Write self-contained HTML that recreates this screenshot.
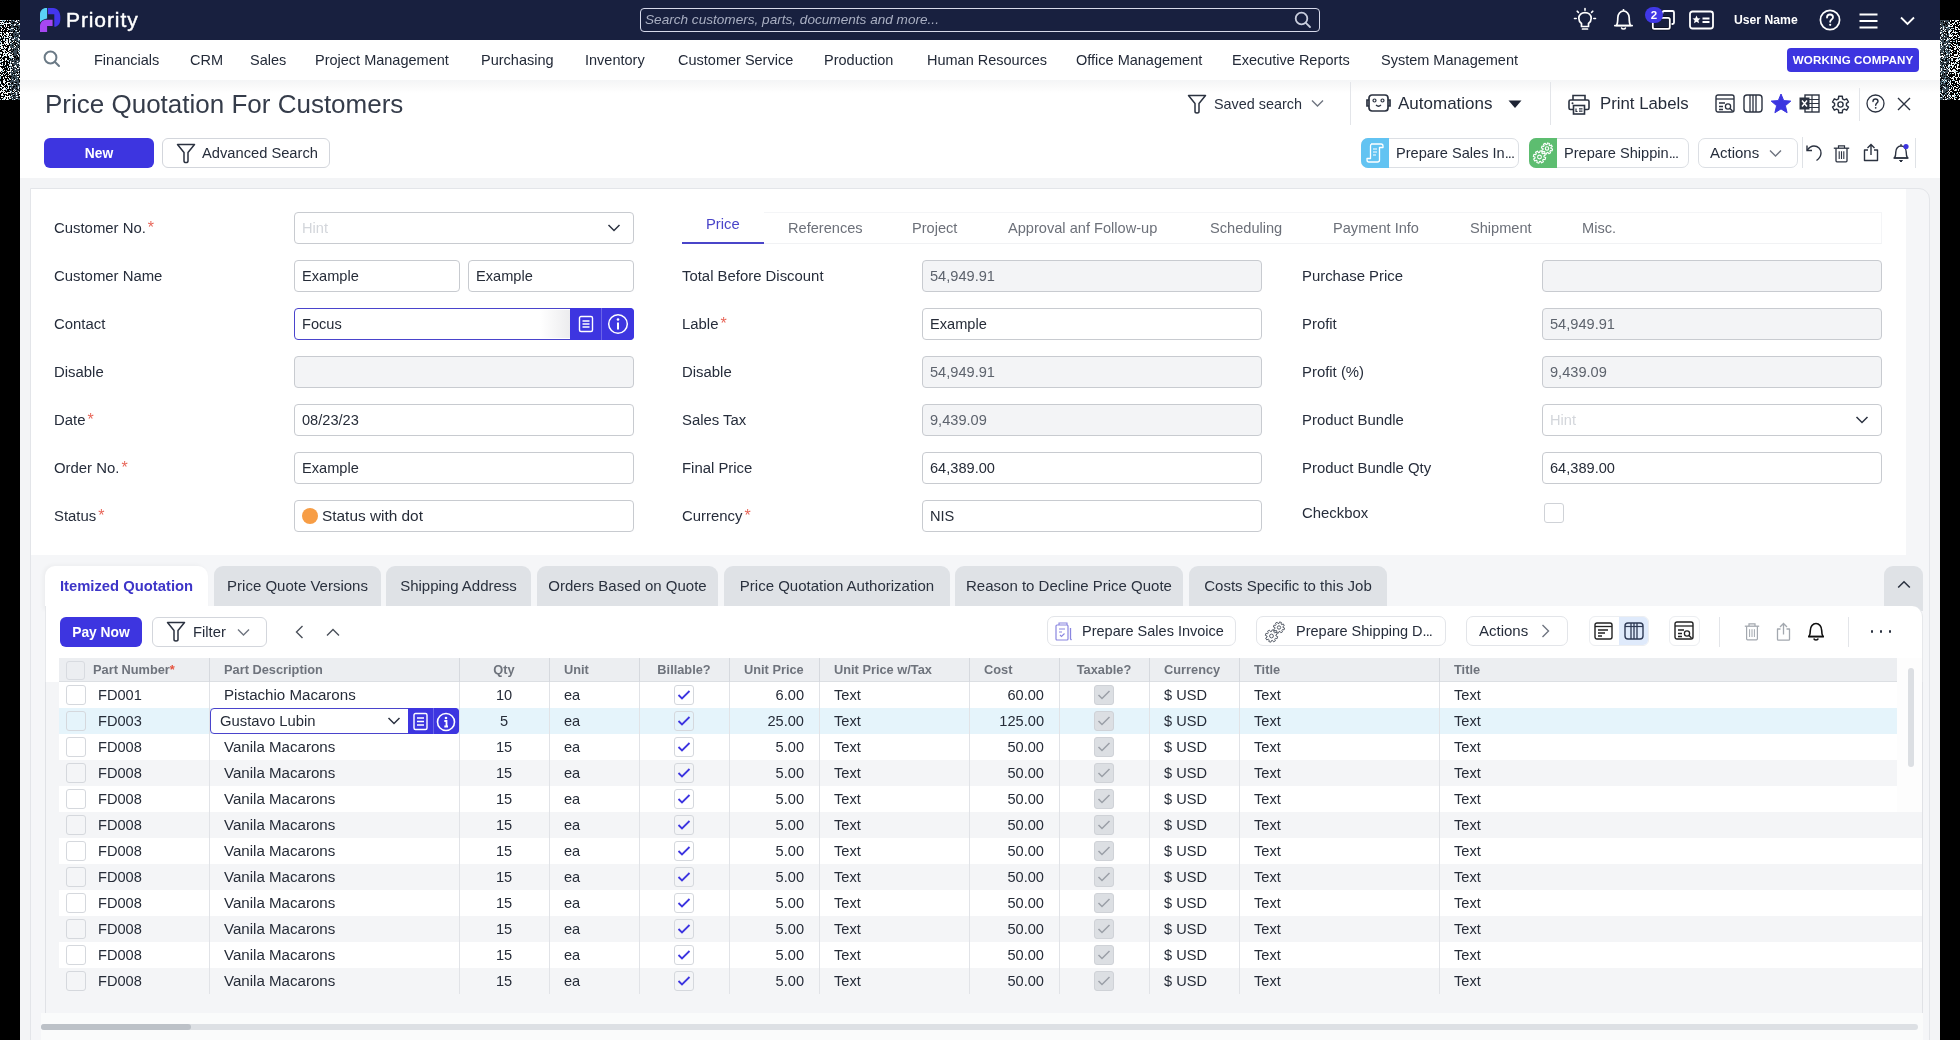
<!DOCTYPE html>
<html><head><meta charset="utf-8"><style>
html,body{margin:0;padding:0;}
body{width:1960px;height:1040px;overflow:hidden;position:relative;background:#000;font-family:"Liberation Sans", sans-serif;}
svg{overflow:visible}
</style></head><body>
<div style="position:absolute;left:0;top:0;width:1960px;height:1040px;will-change:transform;background:#000;overflow:hidden"><svg style="position:absolute;left:0px;top:0" width="20" height="120" shape-rendering="crispEdges"><path fill="#ffffff" d="M0 20h1v1h-1zM1 20h1v1h-1zM5 20h1v1h-1zM7 20h1v1h-1zM10 20h1v1h-1zM16 20h1v1h-1zM18 20h1v1h-1zM15 21h1v1h-1zM16 21h1v1h-1zM0 22h1v1h-1zM2 22h1v1h-1zM9 22h1v1h-1zM17 22h1v1h-1zM5 23h1v1h-1zM6 23h1v1h-1zM7 23h1v1h-1zM10 23h1v1h-1zM19 23h1v1h-1zM0 24h1v1h-1zM2 24h1v1h-1zM6 24h1v1h-1zM15 24h1v1h-1zM19 24h1v1h-1zM4 25h1v1h-1zM6 25h1v1h-1zM14 25h1v1h-1zM4 26h1v1h-1zM6 26h1v1h-1zM8 26h1v1h-1zM1 27h1v1h-1zM2 28h1v1h-1zM7 28h1v1h-1zM11 28h1v1h-1zM12 28h1v1h-1zM1 29h1v1h-1zM4 29h1v1h-1zM8 29h1v1h-1zM14 29h1v1h-1zM1 30h1v1h-1zM7 30h1v1h-1zM16 30h1v1h-1zM19 31h1v1h-1zM0 32h1v1h-1zM1 32h1v1h-1zM3 32h1v1h-1zM6 32h1v1h-1zM7 32h1v1h-1zM9 32h1v1h-1zM11 32h1v1h-1zM17 32h1v1h-1zM4 33h1v1h-1zM6 33h1v1h-1zM7 33h1v1h-1zM8 33h1v1h-1zM0 34h1v1h-1zM1 34h1v1h-1zM4 34h1v1h-1zM5 34h1v1h-1zM8 34h1v1h-1zM10 34h1v1h-1zM1 35h1v1h-1zM3 35h1v1h-1zM19 35h1v1h-1zM2 36h1v1h-1zM7 36h1v1h-1zM9 36h1v1h-1zM11 36h1v1h-1zM0 37h1v1h-1zM4 37h1v1h-1zM6 37h1v1h-1zM7 37h1v1h-1zM9 38h1v1h-1zM10 38h1v1h-1zM14 38h1v1h-1zM18 38h1v1h-1zM4 39h1v1h-1zM6 39h1v1h-1zM12 39h1v1h-1zM13 39h1v1h-1zM19 39h1v1h-1zM1 40h1v1h-1zM7 40h1v1h-1zM6 41h1v1h-1zM9 41h1v1h-1zM13 41h1v1h-1zM15 41h1v1h-1zM4 42h1v1h-1zM6 42h1v1h-1zM7 42h1v1h-1zM9 42h1v1h-1zM1 43h1v1h-1zM5 43h1v1h-1zM6 43h1v1h-1zM7 43h1v1h-1zM10 43h1v1h-1zM18 43h1v1h-1zM1 44h1v1h-1zM3 44h1v1h-1zM7 44h1v1h-1zM8 44h1v1h-1zM16 44h1v1h-1zM0 45h1v1h-1zM14 45h1v1h-1zM1 46h1v1h-1zM2 46h1v1h-1zM4 46h1v1h-1zM9 46h1v1h-1zM15 46h1v1h-1zM1 47h1v1h-1zM4 47h1v1h-1zM6 47h1v1h-1zM9 47h1v1h-1zM14 47h1v1h-1zM1 48h1v1h-1zM2 48h1v1h-1zM5 48h1v1h-1zM10 48h1v1h-1zM12 48h1v1h-1zM18 48h1v1h-1zM0 49h1v1h-1zM8 49h1v1h-1zM9 49h1v1h-1zM5 50h1v1h-1zM8 50h1v1h-1zM3 51h1v1h-1zM6 51h1v1h-1zM10 51h1v1h-1zM18 51h1v1h-1zM1 52h1v1h-1zM7 52h1v1h-1zM19 52h1v1h-1zM1 53h1v1h-1zM3 53h1v1h-1zM4 53h1v1h-1zM6 53h1v1h-1zM7 53h1v1h-1zM9 53h1v1h-1zM3 54h1v1h-1zM5 54h1v1h-1zM8 54h1v1h-1zM9 54h1v1h-1zM10 54h1v1h-1zM11 54h1v1h-1zM17 54h1v1h-1zM0 55h1v1h-1zM4 55h1v1h-1zM5 55h1v1h-1zM6 55h1v1h-1zM8 55h1v1h-1zM12 55h1v1h-1zM18 55h1v1h-1zM0 56h1v1h-1zM2 56h1v1h-1zM3 56h1v1h-1zM9 56h1v1h-1zM11 56h1v1h-1zM10 57h1v1h-1zM12 57h1v1h-1zM13 57h1v1h-1zM6 58h1v1h-1zM0 59h1v1h-1zM5 59h1v1h-1zM6 59h1v1h-1zM13 59h1v1h-1zM2 60h1v1h-1zM3 60h1v1h-1zM5 60h1v1h-1zM0 61h1v1h-1zM2 61h1v1h-1zM10 61h1v1h-1zM17 61h1v1h-1zM5 62h1v1h-1zM10 62h1v1h-1zM12 62h1v1h-1zM13 62h1v1h-1zM19 62h1v1h-1zM2 63h1v1h-1zM5 63h1v1h-1zM8 63h1v1h-1zM17 63h1v1h-1zM19 63h1v1h-1zM0 64h1v1h-1zM5 64h1v1h-1zM10 64h1v1h-1zM11 64h1v1h-1zM0 65h1v1h-1zM1 65h1v1h-1zM2 65h1v1h-1zM9 65h1v1h-1zM11 65h1v1h-1zM15 65h1v1h-1zM7 66h1v1h-1zM14 66h1v1h-1zM15 66h1v1h-1zM19 66h1v1h-1zM0 67h1v1h-1zM10 67h1v1h-1zM12 67h1v1h-1zM16 67h1v1h-1zM0 68h1v1h-1zM1 68h1v1h-1zM3 68h1v1h-1zM8 68h1v1h-1zM17 68h1v1h-1zM18 68h1v1h-1zM0 69h1v1h-1zM2 69h1v1h-1zM8 69h1v1h-1zM10 69h1v1h-1zM11 69h1v1h-1zM15 69h1v1h-1zM0 70h1v1h-1zM1 70h1v1h-1zM4 70h1v1h-1zM10 70h1v1h-1zM0 71h1v1h-1zM3 71h1v1h-1zM7 71h1v1h-1zM8 71h1v1h-1zM9 71h1v1h-1zM10 71h1v1h-1zM12 71h1v1h-1zM18 71h1v1h-1zM8 72h1v1h-1zM3 73h1v1h-1zM18 73h1v1h-1zM0 74h1v1h-1zM10 74h1v1h-1zM15 74h1v1h-1zM17 74h1v1h-1zM1 75h1v1h-1zM2 75h1v1h-1zM8 75h1v1h-1zM17 76h1v1h-1zM18 76h1v1h-1zM3 77h1v1h-1zM5 77h1v1h-1zM6 77h1v1h-1zM8 77h1v1h-1zM3 78h1v1h-1zM9 78h1v1h-1zM19 78h1v1h-1zM7 79h1v1h-1zM10 79h1v1h-1zM4 80h1v1h-1zM14 80h1v1h-1zM3 81h1v1h-1zM4 81h1v1h-1zM0 82h1v1h-1zM3 82h1v1h-1zM4 82h1v1h-1zM7 82h1v1h-1zM8 82h1v1h-1zM7 83h1v1h-1zM10 83h1v1h-1zM19 83h1v1h-1zM5 84h1v1h-1zM7 84h1v1h-1zM1 85h1v1h-1zM2 85h1v1h-1zM8 85h1v1h-1zM12 85h1v1h-1zM2 86h1v1h-1zM3 86h1v1h-1zM8 86h1v1h-1zM0 87h1v1h-1zM1 87h1v1h-1zM4 87h1v1h-1zM8 87h1v1h-1zM18 87h1v1h-1zM4 88h1v1h-1zM8 88h1v1h-1zM10 88h1v1h-1zM2 89h1v1h-1zM3 89h1v1h-1zM4 89h1v1h-1zM14 89h1v1h-1zM1 90h1v1h-1zM3 90h1v1h-1zM13 90h1v1h-1zM15 90h1v1h-1zM0 91h1v1h-1zM4 91h1v1h-1zM10 91h1v1h-1zM18 91h1v1h-1zM0 92h1v1h-1zM3 92h1v1h-1zM7 92h1v1h-1zM9 92h1v1h-1zM10 92h1v1h-1zM16 92h1v1h-1zM19 92h1v1h-1zM2 93h1v1h-1zM4 93h1v1h-1zM5 93h1v1h-1zM6 93h1v1h-1zM7 93h1v1h-1zM19 93h1v1h-1zM1 94h1v1h-1zM2 94h1v1h-1zM7 94h1v1h-1zM16 94h1v1h-1zM2 95h1v1h-1zM5 95h1v1h-1zM11 95h1v1h-1zM19 95h1v1h-1zM5 96h1v1h-1zM6 96h1v1h-1zM7 96h1v1h-1zM8 96h1v1h-1zM9 96h1v1h-1zM16 96h1v1h-1zM17 96h1v1h-1zM1 97h1v1h-1zM2 97h1v1h-1zM4 97h1v1h-1zM7 97h1v1h-1zM12 97h1v1h-1zM4 98h1v1h-1zM7 98h1v1h-1zM10 98h1v1h-1zM16 98h1v1h-1zM2 99h1v1h-1zM4 99h1v1h-1zM6 99h1v1h-1zM7 99h1v1h-1zM14 99h1v1h-1z"/><path fill="#9fc9d8" d="M2 20h1v1h-1zM3 20h1v1h-1zM4 20h1v1h-1zM9 20h1v1h-1zM13 20h1v1h-1zM2 21h1v1h-1zM4 21h1v1h-1zM6 22h1v1h-1zM4 23h1v1h-1zM1 24h1v1h-1zM11 24h1v1h-1zM18 24h1v1h-1zM0 26h1v1h-1zM1 26h1v1h-1zM5 27h1v1h-1zM13 28h1v1h-1zM16 28h1v1h-1zM9 29h1v1h-1zM10 29h1v1h-1zM15 30h1v1h-1zM18 32h1v1h-1zM1 33h1v1h-1zM7 34h1v1h-1zM2 37h1v1h-1zM5 37h1v1h-1zM8 37h1v1h-1zM10 37h1v1h-1zM14 37h1v1h-1zM16 37h1v1h-1zM0 38h1v1h-1zM4 38h1v1h-1zM3 40h1v1h-1zM6 40h1v1h-1zM10 40h1v1h-1zM18 40h1v1h-1zM0 41h1v1h-1zM0 42h1v1h-1zM8 43h1v1h-1zM11 43h1v1h-1zM0 44h1v1h-1zM2 44h1v1h-1zM0 47h1v1h-1zM3 48h1v1h-1zM8 48h1v1h-1zM19 50h1v1h-1zM0 53h1v1h-1zM5 53h1v1h-1zM19 53h1v1h-1zM6 54h1v1h-1zM3 55h1v1h-1zM9 55h1v1h-1zM6 56h1v1h-1zM10 56h1v1h-1zM2 57h1v1h-1zM11 57h1v1h-1zM11 58h1v1h-1zM9 59h1v1h-1zM8 60h1v1h-1zM1 61h1v1h-1zM8 61h1v1h-1zM0 62h1v1h-1zM10 63h1v1h-1zM18 63h1v1h-1zM2 64h1v1h-1zM9 64h1v1h-1zM4 65h1v1h-1zM10 65h1v1h-1zM16 66h1v1h-1zM5 67h1v1h-1zM7 67h1v1h-1zM10 68h1v1h-1zM2 70h1v1h-1zM6 70h1v1h-1zM2 71h1v1h-1zM6 72h1v1h-1zM2 74h1v1h-1zM13 74h1v1h-1zM0 76h1v1h-1zM0 77h1v1h-1zM0 78h1v1h-1zM17 78h1v1h-1zM9 79h1v1h-1zM8 80h1v1h-1zM0 81h1v1h-1zM15 83h1v1h-1zM1 84h1v1h-1zM7 85h1v1h-1zM9 85h1v1h-1zM10 85h1v1h-1zM18 86h1v1h-1zM10 87h1v1h-1zM1 88h1v1h-1zM7 88h1v1h-1zM5 89h1v1h-1zM6 90h1v1h-1zM9 90h1v1h-1zM11 91h1v1h-1zM15 92h1v1h-1zM13 94h1v1h-1zM3 95h1v1h-1zM10 96h1v1h-1zM5 97h1v1h-1zM3 98h1v1h-1zM17 98h1v1h-1zM0 99h1v1h-1zM3 99h1v1h-1zM8 99h1v1h-1zM12 99h1v1h-1z"/><path fill="#3a4a55" d="M11 20h1v1h-1zM12 20h1v1h-1zM14 20h1v1h-1zM17 20h1v1h-1zM19 20h1v1h-1zM11 21h1v1h-1zM13 21h1v1h-1zM14 21h1v1h-1zM17 21h1v1h-1zM19 21h1v1h-1zM10 22h1v1h-1zM11 22h1v1h-1zM12 22h1v1h-1zM15 22h1v1h-1zM16 22h1v1h-1zM18 22h1v1h-1zM14 23h1v1h-1zM15 23h1v1h-1zM16 23h1v1h-1zM10 24h1v1h-1zM12 24h1v1h-1zM13 24h1v1h-1zM17 24h1v1h-1zM12 25h1v1h-1zM13 25h1v1h-1zM15 25h1v1h-1zM16 25h1v1h-1zM17 25h1v1h-1zM18 25h1v1h-1zM19 25h1v1h-1zM11 26h1v1h-1zM12 26h1v1h-1zM18 26h1v1h-1zM19 26h1v1h-1zM11 27h1v1h-1zM12 27h1v1h-1zM13 27h1v1h-1zM14 27h1v1h-1zM15 27h1v1h-1zM16 27h1v1h-1zM19 27h1v1h-1zM10 28h1v1h-1zM18 28h1v1h-1zM19 28h1v1h-1zM11 29h1v1h-1zM12 29h1v1h-1zM16 29h1v1h-1zM18 29h1v1h-1zM10 30h1v1h-1zM11 30h1v1h-1zM12 30h1v1h-1zM13 30h1v1h-1zM17 30h1v1h-1zM19 30h1v1h-1zM10 31h1v1h-1zM12 31h1v1h-1zM15 31h1v1h-1zM16 31h1v1h-1zM14 32h1v1h-1zM15 32h1v1h-1zM16 32h1v1h-1zM19 32h1v1h-1zM11 33h1v1h-1zM13 33h1v1h-1zM14 33h1v1h-1zM15 33h1v1h-1zM16 33h1v1h-1zM17 33h1v1h-1zM18 33h1v1h-1zM13 34h1v1h-1zM14 34h1v1h-1zM16 34h1v1h-1zM17 34h1v1h-1zM18 34h1v1h-1zM19 34h1v1h-1zM10 35h1v1h-1zM13 35h1v1h-1zM14 35h1v1h-1zM15 35h1v1h-1zM16 35h1v1h-1zM18 35h1v1h-1zM14 36h1v1h-1zM15 36h1v1h-1zM17 36h1v1h-1zM18 36h1v1h-1zM11 37h1v1h-1zM12 37h1v1h-1zM15 37h1v1h-1zM17 37h1v1h-1zM18 37h1v1h-1zM12 38h1v1h-1zM13 38h1v1h-1zM15 38h1v1h-1zM16 38h1v1h-1zM17 38h1v1h-1zM19 38h1v1h-1zM11 39h1v1h-1zM14 39h1v1h-1zM15 39h1v1h-1zM16 39h1v1h-1zM17 39h1v1h-1zM12 40h1v1h-1zM13 40h1v1h-1zM14 40h1v1h-1zM16 40h1v1h-1zM17 40h1v1h-1zM19 40h1v1h-1zM11 41h1v1h-1zM16 41h1v1h-1zM18 41h1v1h-1zM19 41h1v1h-1zM11 42h1v1h-1zM15 42h1v1h-1zM16 42h1v1h-1zM18 42h1v1h-1zM13 43h1v1h-1zM14 43h1v1h-1zM17 43h1v1h-1zM19 43h1v1h-1zM10 44h1v1h-1zM11 44h1v1h-1zM12 44h1v1h-1zM13 44h1v1h-1zM17 44h1v1h-1zM18 44h1v1h-1zM19 44h1v1h-1zM10 45h1v1h-1zM11 45h1v1h-1zM13 45h1v1h-1zM16 45h1v1h-1zM17 45h1v1h-1zM19 45h1v1h-1zM10 46h1v1h-1zM11 46h1v1h-1zM12 46h1v1h-1zM13 46h1v1h-1zM14 46h1v1h-1zM17 46h1v1h-1zM18 46h1v1h-1zM10 47h1v1h-1zM11 47h1v1h-1zM12 47h1v1h-1zM13 47h1v1h-1zM15 47h1v1h-1zM16 47h1v1h-1zM17 47h1v1h-1zM19 47h1v1h-1zM13 48h1v1h-1zM14 48h1v1h-1zM15 48h1v1h-1zM16 48h1v1h-1zM17 48h1v1h-1zM10 49h1v1h-1zM12 49h1v1h-1zM14 49h1v1h-1zM16 49h1v1h-1zM19 49h1v1h-1zM11 50h1v1h-1zM12 50h1v1h-1zM14 50h1v1h-1zM15 50h1v1h-1zM16 50h1v1h-1zM17 50h1v1h-1zM18 50h1v1h-1zM13 51h1v1h-1zM14 51h1v1h-1zM15 51h1v1h-1zM16 51h1v1h-1zM19 51h1v1h-1zM10 52h1v1h-1zM11 52h1v1h-1zM12 52h1v1h-1zM13 52h1v1h-1zM14 52h1v1h-1zM15 52h1v1h-1zM16 52h1v1h-1zM18 52h1v1h-1zM10 53h1v1h-1zM14 53h1v1h-1zM15 53h1v1h-1zM16 53h1v1h-1zM18 53h1v1h-1zM14 54h1v1h-1zM15 54h1v1h-1zM16 54h1v1h-1zM19 54h1v1h-1zM11 55h1v1h-1zM13 55h1v1h-1zM14 55h1v1h-1zM15 55h1v1h-1zM17 55h1v1h-1zM16 56h1v1h-1zM19 56h1v1h-1zM16 57h1v1h-1zM19 57h1v1h-1zM10 58h1v1h-1zM13 58h1v1h-1zM14 58h1v1h-1zM15 58h1v1h-1zM19 58h1v1h-1zM11 59h1v1h-1zM15 59h1v1h-1zM17 59h1v1h-1zM19 59h1v1h-1zM10 60h1v1h-1zM11 60h1v1h-1zM12 60h1v1h-1zM13 60h1v1h-1zM14 60h1v1h-1zM15 60h1v1h-1zM16 60h1v1h-1zM17 60h1v1h-1zM18 60h1v1h-1zM19 60h1v1h-1zM11 61h1v1h-1zM13 61h1v1h-1zM14 61h1v1h-1zM16 61h1v1h-1zM18 61h1v1h-1zM19 61h1v1h-1zM11 62h1v1h-1zM14 62h1v1h-1zM15 62h1v1h-1zM16 62h1v1h-1zM17 62h1v1h-1zM18 62h1v1h-1zM12 63h1v1h-1zM13 63h1v1h-1zM14 63h1v1h-1zM15 63h1v1h-1zM16 63h1v1h-1zM13 64h1v1h-1zM14 64h1v1h-1zM15 64h1v1h-1zM16 64h1v1h-1zM17 64h1v1h-1zM14 65h1v1h-1zM16 65h1v1h-1zM17 65h1v1h-1zM18 65h1v1h-1zM19 65h1v1h-1zM10 66h1v1h-1zM11 66h1v1h-1zM12 66h1v1h-1zM13 66h1v1h-1zM18 66h1v1h-1zM11 67h1v1h-1zM14 67h1v1h-1zM15 67h1v1h-1zM18 67h1v1h-1zM19 67h1v1h-1zM12 68h1v1h-1zM13 68h1v1h-1zM14 68h1v1h-1zM15 68h1v1h-1zM19 68h1v1h-1zM12 69h1v1h-1zM14 69h1v1h-1zM16 69h1v1h-1zM17 69h1v1h-1zM18 69h1v1h-1zM11 70h1v1h-1zM13 70h1v1h-1zM14 70h1v1h-1zM15 70h1v1h-1zM16 70h1v1h-1zM17 70h1v1h-1zM18 70h1v1h-1zM19 70h1v1h-1zM11 71h1v1h-1zM14 71h1v1h-1zM15 71h1v1h-1zM16 71h1v1h-1zM17 71h1v1h-1zM10 72h1v1h-1zM11 72h1v1h-1zM12 72h1v1h-1zM13 72h1v1h-1zM14 72h1v1h-1zM15 72h1v1h-1zM18 72h1v1h-1zM11 73h1v1h-1zM12 73h1v1h-1zM15 73h1v1h-1zM19 73h1v1h-1zM11 74h1v1h-1zM14 74h1v1h-1zM16 74h1v1h-1zM18 74h1v1h-1zM19 74h1v1h-1zM10 75h1v1h-1zM11 75h1v1h-1zM12 75h1v1h-1zM13 75h1v1h-1zM15 75h1v1h-1zM16 75h1v1h-1zM19 75h1v1h-1zM12 76h1v1h-1zM13 76h1v1h-1zM14 76h1v1h-1zM15 76h1v1h-1zM16 76h1v1h-1zM11 77h1v1h-1zM12 77h1v1h-1zM14 77h1v1h-1zM15 77h1v1h-1zM16 77h1v1h-1zM17 77h1v1h-1zM18 77h1v1h-1zM11 78h1v1h-1zM12 78h1v1h-1zM13 78h1v1h-1zM15 78h1v1h-1zM16 78h1v1h-1zM13 79h1v1h-1zM16 79h1v1h-1zM17 79h1v1h-1zM19 79h1v1h-1zM11 80h1v1h-1zM12 80h1v1h-1zM13 80h1v1h-1zM15 80h1v1h-1zM16 80h1v1h-1zM17 80h1v1h-1zM18 80h1v1h-1zM10 81h1v1h-1zM11 81h1v1h-1zM12 81h1v1h-1zM13 81h1v1h-1zM14 81h1v1h-1zM15 81h1v1h-1zM16 81h1v1h-1zM17 81h1v1h-1zM18 81h1v1h-1zM10 82h1v1h-1zM11 82h1v1h-1zM13 82h1v1h-1zM14 82h1v1h-1zM17 82h1v1h-1zM18 82h1v1h-1zM19 82h1v1h-1zM13 83h1v1h-1zM16 83h1v1h-1zM17 83h1v1h-1zM18 83h1v1h-1zM10 84h1v1h-1zM11 84h1v1h-1zM12 84h1v1h-1zM13 84h1v1h-1zM16 84h1v1h-1zM17 84h1v1h-1zM19 84h1v1h-1zM11 85h1v1h-1zM13 85h1v1h-1zM14 85h1v1h-1zM15 85h1v1h-1zM17 85h1v1h-1zM18 85h1v1h-1zM19 85h1v1h-1zM11 86h1v1h-1zM12 86h1v1h-1zM15 86h1v1h-1zM17 86h1v1h-1zM19 86h1v1h-1zM11 87h1v1h-1zM12 87h1v1h-1zM14 87h1v1h-1zM15 87h1v1h-1zM16 87h1v1h-1zM17 87h1v1h-1zM19 87h1v1h-1zM11 88h1v1h-1zM13 88h1v1h-1zM14 88h1v1h-1zM15 88h1v1h-1zM17 88h1v1h-1zM11 89h1v1h-1zM13 89h1v1h-1zM15 89h1v1h-1zM16 89h1v1h-1zM18 89h1v1h-1zM19 89h1v1h-1zM10 90h1v1h-1zM11 90h1v1h-1zM14 90h1v1h-1zM16 90h1v1h-1zM17 90h1v1h-1zM18 90h1v1h-1zM17 91h1v1h-1zM19 91h1v1h-1zM11 92h1v1h-1zM17 92h1v1h-1zM10 93h1v1h-1zM11 93h1v1h-1zM14 93h1v1h-1zM15 93h1v1h-1zM17 93h1v1h-1zM18 93h1v1h-1zM11 94h1v1h-1zM12 94h1v1h-1zM14 94h1v1h-1zM15 94h1v1h-1zM17 94h1v1h-1zM12 95h1v1h-1zM15 95h1v1h-1zM16 95h1v1h-1zM17 95h1v1h-1zM11 96h1v1h-1zM12 96h1v1h-1zM13 96h1v1h-1zM14 96h1v1h-1zM15 96h1v1h-1zM18 96h1v1h-1zM19 96h1v1h-1zM10 97h1v1h-1zM11 97h1v1h-1zM14 97h1v1h-1zM15 97h1v1h-1zM16 97h1v1h-1zM17 97h1v1h-1zM11 98h1v1h-1zM12 98h1v1h-1zM13 98h1v1h-1zM15 98h1v1h-1zM18 98h1v1h-1zM19 98h1v1h-1zM13 99h1v1h-1zM15 99h1v1h-1zM18 99h1v1h-1zM19 99h1v1h-1z"/><path fill="#dfe8ee" d="M1 22h1v1h-1zM3 22h1v1h-1zM1 23h1v1h-1zM3 23h1v1h-1zM8 23h1v1h-1zM9 23h1v1h-1zM3 24h1v1h-1zM14 24h1v1h-1zM10 25h1v1h-1zM8 28h1v1h-1zM3 30h1v1h-1zM10 32h1v1h-1zM12 32h1v1h-1zM6 35h1v1h-1zM7 35h1v1h-1zM8 35h1v1h-1zM4 36h1v1h-1zM10 36h1v1h-1zM19 36h1v1h-1zM3 39h1v1h-1zM7 39h1v1h-1zM9 39h1v1h-1zM18 39h1v1h-1zM4 40h1v1h-1zM9 40h1v1h-1zM5 41h1v1h-1zM7 41h1v1h-1zM10 41h1v1h-1zM1 42h1v1h-1zM12 42h1v1h-1zM17 42h1v1h-1zM4 43h1v1h-1zM5 44h1v1h-1zM1 45h1v1h-1zM6 45h1v1h-1zM2 47h1v1h-1zM5 47h1v1h-1zM9 48h1v1h-1zM4 49h1v1h-1zM18 49h1v1h-1zM2 50h1v1h-1zM3 50h1v1h-1zM4 50h1v1h-1zM4 51h1v1h-1zM9 51h1v1h-1zM0 52h1v1h-1zM4 52h1v1h-1zM8 52h1v1h-1zM12 53h1v1h-1zM12 56h1v1h-1zM18 56h1v1h-1zM9 57h1v1h-1zM1 58h1v1h-1zM5 58h1v1h-1zM2 59h1v1h-1zM7 60h1v1h-1zM19 64h1v1h-1zM9 67h1v1h-1zM1 69h1v1h-1zM1 72h1v1h-1zM5 73h1v1h-1zM8 73h1v1h-1zM10 73h1v1h-1zM16 73h1v1h-1zM4 74h1v1h-1zM9 74h1v1h-1zM6 75h1v1h-1zM5 76h1v1h-1zM4 79h1v1h-1zM12 79h1v1h-1zM15 79h1v1h-1zM3 80h1v1h-1zM7 80h1v1h-1zM5 81h1v1h-1zM9 82h1v1h-1zM0 83h1v1h-1zM4 83h1v1h-1zM6 83h1v1h-1zM14 83h1v1h-1zM4 85h1v1h-1zM6 87h1v1h-1zM3 88h1v1h-1zM5 88h1v1h-1zM18 88h1v1h-1zM6 89h1v1h-1zM1 91h1v1h-1zM2 91h1v1h-1zM3 91h1v1h-1zM14 91h1v1h-1zM5 92h1v1h-1zM8 92h1v1h-1zM12 92h1v1h-1zM13 92h1v1h-1zM16 93h1v1h-1zM1 95h1v1h-1zM9 95h1v1h-1zM9 97h1v1h-1zM5 98h1v1h-1zM9 98h1v1h-1z"/></svg><svg style="position:absolute;left:1940px;top:0" width="20" height="120" shape-rendering="crispEdges"><path fill="#3a4a55" d="M0 20h1v1h-1zM1 20h1v1h-1zM2 20h1v1h-1zM3 20h1v1h-1zM4 20h1v1h-1zM5 20h1v1h-1zM6 20h1v1h-1zM7 20h1v1h-1zM8 20h1v1h-1zM0 21h1v1h-1zM2 21h1v1h-1zM5 21h1v1h-1zM6 21h1v1h-1zM7 21h1v1h-1zM8 21h1v1h-1zM0 22h1v1h-1zM1 22h1v1h-1zM2 22h1v1h-1zM4 22h1v1h-1zM6 22h1v1h-1zM0 23h1v1h-1zM1 23h1v1h-1zM2 23h1v1h-1zM3 23h1v1h-1zM4 23h1v1h-1zM7 23h1v1h-1zM8 23h1v1h-1zM1 24h1v1h-1zM2 24h1v1h-1zM5 24h1v1h-1zM7 24h1v1h-1zM8 24h1v1h-1zM9 24h1v1h-1zM1 25h1v1h-1zM2 25h1v1h-1zM3 25h1v1h-1zM5 25h1v1h-1zM6 25h1v1h-1zM0 26h1v1h-1zM2 26h1v1h-1zM4 26h1v1h-1zM5 26h1v1h-1zM7 26h1v1h-1zM0 27h1v1h-1zM2 27h1v1h-1zM4 27h1v1h-1zM5 27h1v1h-1zM8 27h1v1h-1zM9 27h1v1h-1zM1 28h1v1h-1zM2 28h1v1h-1zM4 28h1v1h-1zM6 28h1v1h-1zM7 28h1v1h-1zM8 28h1v1h-1zM0 29h1v1h-1zM2 29h1v1h-1zM4 29h1v1h-1zM6 29h1v1h-1zM7 29h1v1h-1zM8 29h1v1h-1zM0 30h1v1h-1zM2 30h1v1h-1zM5 30h1v1h-1zM7 30h1v1h-1zM8 30h1v1h-1zM0 31h1v1h-1zM1 31h1v1h-1zM2 31h1v1h-1zM4 31h1v1h-1zM6 31h1v1h-1zM2 32h1v1h-1zM3 32h1v1h-1zM1 33h1v1h-1zM2 33h1v1h-1zM5 33h1v1h-1zM6 33h1v1h-1zM8 33h1v1h-1zM1 34h1v1h-1zM3 34h1v1h-1zM5 34h1v1h-1zM8 34h1v1h-1zM3 35h1v1h-1zM4 35h1v1h-1zM6 35h1v1h-1zM7 35h1v1h-1zM8 35h1v1h-1zM0 36h1v1h-1zM1 36h1v1h-1zM5 36h1v1h-1zM6 36h1v1h-1zM1 37h1v1h-1zM3 37h1v1h-1zM4 37h1v1h-1zM5 37h1v1h-1zM6 37h1v1h-1zM7 37h1v1h-1zM8 37h1v1h-1zM2 38h1v1h-1zM3 38h1v1h-1zM4 38h1v1h-1zM8 38h1v1h-1zM0 39h1v1h-1zM2 39h1v1h-1zM3 39h1v1h-1zM5 39h1v1h-1zM6 39h1v1h-1zM9 39h1v1h-1zM0 40h1v1h-1zM1 40h1v1h-1zM2 40h1v1h-1zM3 40h1v1h-1zM8 40h1v1h-1zM9 40h1v1h-1zM1 41h1v1h-1zM2 41h1v1h-1zM3 41h1v1h-1zM5 41h1v1h-1zM6 41h1v1h-1zM7 41h1v1h-1zM8 41h1v1h-1zM0 42h1v1h-1zM2 42h1v1h-1zM3 42h1v1h-1zM4 42h1v1h-1zM5 42h1v1h-1zM6 42h1v1h-1zM7 42h1v1h-1zM8 42h1v1h-1zM9 42h1v1h-1zM2 43h1v1h-1zM4 43h1v1h-1zM5 43h1v1h-1zM3 44h1v1h-1zM6 44h1v1h-1zM7 44h1v1h-1zM8 44h1v1h-1zM9 44h1v1h-1zM0 45h1v1h-1zM2 45h1v1h-1zM3 45h1v1h-1zM4 45h1v1h-1zM5 45h1v1h-1zM6 45h1v1h-1zM8 45h1v1h-1zM9 45h1v1h-1zM0 46h1v1h-1zM1 46h1v1h-1zM3 46h1v1h-1zM5 46h1v1h-1zM7 46h1v1h-1zM8 46h1v1h-1zM0 47h1v1h-1zM2 47h1v1h-1zM3 47h1v1h-1zM4 47h1v1h-1zM5 47h1v1h-1zM6 47h1v1h-1zM0 48h1v1h-1zM1 48h1v1h-1zM2 48h1v1h-1zM3 48h1v1h-1zM4 48h1v1h-1zM5 48h1v1h-1zM7 48h1v1h-1zM1 49h1v1h-1zM2 49h1v1h-1zM3 49h1v1h-1zM6 49h1v1h-1zM8 49h1v1h-1zM0 50h1v1h-1zM1 50h1v1h-1zM2 50h1v1h-1zM3 50h1v1h-1zM5 50h1v1h-1zM6 50h1v1h-1zM7 50h1v1h-1zM9 50h1v1h-1zM0 51h1v1h-1zM1 51h1v1h-1zM2 51h1v1h-1zM6 51h1v1h-1zM7 51h1v1h-1zM8 51h1v1h-1zM1 52h1v1h-1zM2 52h1v1h-1zM3 52h1v1h-1zM4 52h1v1h-1zM7 52h1v1h-1zM8 52h1v1h-1zM9 52h1v1h-1zM0 53h1v1h-1zM3 53h1v1h-1zM6 53h1v1h-1zM8 53h1v1h-1zM9 53h1v1h-1zM0 54h1v1h-1zM3 54h1v1h-1zM4 54h1v1h-1zM8 54h1v1h-1zM0 55h1v1h-1zM1 55h1v1h-1zM5 55h1v1h-1zM6 55h1v1h-1zM7 55h1v1h-1zM4 56h1v1h-1zM5 56h1v1h-1zM6 56h1v1h-1zM7 56h1v1h-1zM8 56h1v1h-1zM2 57h1v1h-1zM4 57h1v1h-1zM6 57h1v1h-1zM0 58h1v1h-1zM1 58h1v1h-1zM3 58h1v1h-1zM4 58h1v1h-1zM5 58h1v1h-1zM8 58h1v1h-1zM0 59h1v1h-1zM3 59h1v1h-1zM8 59h1v1h-1zM9 59h1v1h-1zM1 60h1v1h-1zM4 60h1v1h-1zM7 60h1v1h-1zM8 60h1v1h-1zM9 60h1v1h-1zM2 61h1v1h-1zM3 61h1v1h-1zM4 61h1v1h-1zM5 61h1v1h-1zM6 61h1v1h-1zM7 61h1v1h-1zM8 61h1v1h-1zM0 62h1v1h-1zM2 62h1v1h-1zM3 62h1v1h-1zM6 62h1v1h-1zM7 62h1v1h-1zM0 63h1v1h-1zM1 63h1v1h-1zM2 63h1v1h-1zM4 63h1v1h-1zM5 63h1v1h-1zM6 63h1v1h-1zM8 63h1v1h-1zM0 64h1v1h-1zM1 64h1v1h-1zM3 64h1v1h-1zM4 64h1v1h-1zM5 64h1v1h-1zM7 64h1v1h-1zM8 64h1v1h-1zM1 65h1v1h-1zM2 65h1v1h-1zM1 66h1v1h-1zM2 66h1v1h-1zM4 66h1v1h-1zM6 66h1v1h-1zM7 66h1v1h-1zM0 67h1v1h-1zM2 67h1v1h-1zM9 67h1v1h-1zM0 68h1v1h-1zM2 68h1v1h-1zM3 68h1v1h-1zM4 68h1v1h-1zM6 68h1v1h-1zM0 69h1v1h-1zM2 69h1v1h-1zM3 69h1v1h-1zM6 69h1v1h-1zM7 69h1v1h-1zM0 70h1v1h-1zM2 70h1v1h-1zM6 70h1v1h-1zM7 70h1v1h-1zM8 70h1v1h-1zM1 71h1v1h-1zM2 71h1v1h-1zM4 71h1v1h-1zM5 71h1v1h-1zM6 71h1v1h-1zM7 71h1v1h-1zM0 72h1v1h-1zM1 72h1v1h-1zM2 72h1v1h-1zM3 72h1v1h-1zM5 72h1v1h-1zM6 72h1v1h-1zM7 72h1v1h-1zM2 73h1v1h-1zM3 73h1v1h-1zM5 73h1v1h-1zM0 74h1v1h-1zM3 74h1v1h-1zM5 74h1v1h-1zM6 74h1v1h-1zM9 74h1v1h-1zM1 75h1v1h-1zM3 75h1v1h-1zM4 75h1v1h-1zM5 75h1v1h-1zM6 75h1v1h-1zM1 76h1v1h-1zM2 76h1v1h-1zM3 76h1v1h-1zM5 76h1v1h-1zM2 77h1v1h-1zM3 77h1v1h-1zM4 77h1v1h-1zM6 77h1v1h-1zM7 77h1v1h-1zM9 77h1v1h-1zM0 78h1v1h-1zM4 78h1v1h-1zM5 78h1v1h-1zM8 78h1v1h-1zM1 79h1v1h-1zM3 79h1v1h-1zM5 79h1v1h-1zM6 79h1v1h-1zM7 79h1v1h-1zM8 79h1v1h-1zM9 79h1v1h-1zM1 80h1v1h-1zM2 80h1v1h-1zM4 80h1v1h-1zM8 80h1v1h-1zM0 81h1v1h-1zM1 81h1v1h-1zM3 81h1v1h-1zM5 81h1v1h-1zM9 81h1v1h-1zM0 82h1v1h-1zM1 82h1v1h-1zM3 82h1v1h-1zM5 82h1v1h-1zM7 82h1v1h-1zM2 83h1v1h-1zM3 83h1v1h-1zM4 83h1v1h-1zM9 83h1v1h-1zM0 84h1v1h-1zM1 84h1v1h-1zM3 84h1v1h-1zM4 84h1v1h-1zM5 84h1v1h-1zM8 84h1v1h-1zM0 85h1v1h-1zM2 85h1v1h-1zM5 85h1v1h-1zM7 85h1v1h-1zM1 86h1v1h-1zM2 86h1v1h-1zM4 86h1v1h-1zM5 86h1v1h-1zM7 86h1v1h-1zM8 86h1v1h-1zM0 87h1v1h-1zM3 87h1v1h-1zM6 87h1v1h-1zM7 87h1v1h-1zM2 88h1v1h-1zM3 88h1v1h-1zM4 88h1v1h-1zM6 88h1v1h-1zM7 88h1v1h-1zM8 88h1v1h-1zM9 88h1v1h-1zM0 89h1v1h-1zM2 89h1v1h-1zM3 89h1v1h-1zM4 89h1v1h-1zM5 89h1v1h-1zM6 89h1v1h-1zM7 89h1v1h-1zM8 89h1v1h-1zM0 90h1v1h-1zM3 90h1v1h-1zM4 90h1v1h-1zM5 90h1v1h-1zM6 90h1v1h-1zM7 90h1v1h-1zM1 91h1v1h-1zM3 91h1v1h-1zM4 91h1v1h-1zM5 91h1v1h-1zM0 92h1v1h-1zM3 92h1v1h-1zM4 92h1v1h-1zM6 92h1v1h-1zM8 92h1v1h-1zM1 93h1v1h-1zM6 93h1v1h-1zM8 93h1v1h-1zM2 94h1v1h-1zM4 94h1v1h-1zM5 94h1v1h-1zM6 94h1v1h-1zM9 94h1v1h-1zM1 95h1v1h-1zM3 95h1v1h-1zM8 95h1v1h-1zM2 96h1v1h-1zM5 96h1v1h-1zM8 96h1v1h-1zM9 96h1v1h-1zM2 97h1v1h-1zM3 97h1v1h-1zM8 97h1v1h-1zM0 98h1v1h-1zM1 98h1v1h-1zM2 98h1v1h-1zM5 98h1v1h-1zM6 98h1v1h-1zM8 98h1v1h-1zM9 98h1v1h-1zM0 99h1v1h-1zM1 99h1v1h-1zM2 99h1v1h-1zM4 99h1v1h-1zM7 99h1v1h-1zM8 99h1v1h-1zM9 99h1v1h-1z"/><path fill="#dfe8ee" d="M10 20h1v1h-1zM17 22h1v1h-1zM17 23h1v1h-1zM8 26h1v1h-1zM15 26h1v1h-1zM3 28h1v1h-1zM11 28h1v1h-1zM13 28h1v1h-1zM15 28h1v1h-1zM18 28h1v1h-1zM15 29h1v1h-1zM4 30h1v1h-1zM9 30h1v1h-1zM11 30h1v1h-1zM13 30h1v1h-1zM1 32h1v1h-1zM12 32h1v1h-1zM13 32h1v1h-1zM14 32h1v1h-1zM9 33h1v1h-1zM11 33h1v1h-1zM6 34h1v1h-1zM10 34h1v1h-1zM12 35h1v1h-1zM15 35h1v1h-1zM2 36h1v1h-1zM10 36h1v1h-1zM0 38h1v1h-1zM8 39h1v1h-1zM16 40h1v1h-1zM11 41h1v1h-1zM1 43h1v1h-1zM2 46h1v1h-1zM13 46h1v1h-1zM1 47h1v1h-1zM15 48h1v1h-1zM16 48h1v1h-1zM9 49h1v1h-1zM10 49h1v1h-1zM19 50h1v1h-1zM3 51h1v1h-1zM9 51h1v1h-1zM7 54h1v1h-1zM11 54h1v1h-1zM15 54h1v1h-1zM17 54h1v1h-1zM19 54h1v1h-1zM15 55h1v1h-1zM0 57h1v1h-1zM2 58h1v1h-1zM12 58h1v1h-1zM12 59h1v1h-1zM16 59h1v1h-1zM16 60h1v1h-1zM11 62h1v1h-1zM13 62h1v1h-1zM13 63h1v1h-1zM17 64h1v1h-1zM3 65h1v1h-1zM5 65h1v1h-1zM12 65h1v1h-1zM18 65h1v1h-1zM4 67h1v1h-1zM4 69h1v1h-1zM14 69h1v1h-1zM13 70h1v1h-1zM11 71h1v1h-1zM14 71h1v1h-1zM16 71h1v1h-1zM13 73h1v1h-1zM17 73h1v1h-1zM7 75h1v1h-1zM8 76h1v1h-1zM12 77h1v1h-1zM13 79h1v1h-1zM16 81h1v1h-1zM19 82h1v1h-1zM18 83h1v1h-1zM9 85h1v1h-1zM17 87h1v1h-1zM13 89h1v1h-1zM16 89h1v1h-1zM14 90h1v1h-1zM7 92h1v1h-1zM15 95h1v1h-1zM12 96h1v1h-1zM13 96h1v1h-1zM14 96h1v1h-1zM16 97h1v1h-1zM14 99h1v1h-1zM18 99h1v1h-1z"/><path fill="#ffffff" d="M12 20h1v1h-1zM13 20h1v1h-1zM16 20h1v1h-1zM17 20h1v1h-1zM18 20h1v1h-1zM4 21h1v1h-1zM10 21h1v1h-1zM15 21h1v1h-1zM16 21h1v1h-1zM8 22h1v1h-1zM14 22h1v1h-1zM19 22h1v1h-1zM9 23h1v1h-1zM12 23h1v1h-1zM13 23h1v1h-1zM0 24h1v1h-1zM10 24h1v1h-1zM11 24h1v1h-1zM13 24h1v1h-1zM15 24h1v1h-1zM19 24h1v1h-1zM8 25h1v1h-1zM9 25h1v1h-1zM12 25h1v1h-1zM18 25h1v1h-1zM9 26h1v1h-1zM11 26h1v1h-1zM12 26h1v1h-1zM1 27h1v1h-1zM3 27h1v1h-1zM6 27h1v1h-1zM15 27h1v1h-1zM16 27h1v1h-1zM17 27h1v1h-1zM0 28h1v1h-1zM3 29h1v1h-1zM5 29h1v1h-1zM10 29h1v1h-1zM16 29h1v1h-1zM18 29h1v1h-1zM19 29h1v1h-1zM1 30h1v1h-1zM3 31h1v1h-1zM5 31h1v1h-1zM9 31h1v1h-1zM10 31h1v1h-1zM13 31h1v1h-1zM19 31h1v1h-1zM0 32h1v1h-1zM8 32h1v1h-1zM9 32h1v1h-1zM15 32h1v1h-1zM16 32h1v1h-1zM0 33h1v1h-1zM4 33h1v1h-1zM15 33h1v1h-1zM2 34h1v1h-1zM17 34h1v1h-1zM1 35h1v1h-1zM9 35h1v1h-1zM10 35h1v1h-1zM11 35h1v1h-1zM14 35h1v1h-1zM16 35h1v1h-1zM18 35h1v1h-1zM4 36h1v1h-1zM9 36h1v1h-1zM11 36h1v1h-1zM13 36h1v1h-1zM16 36h1v1h-1zM0 37h1v1h-1zM12 37h1v1h-1zM18 37h1v1h-1zM19 37h1v1h-1zM7 38h1v1h-1zM9 38h1v1h-1zM11 38h1v1h-1zM15 38h1v1h-1zM1 39h1v1h-1zM4 39h1v1h-1zM7 39h1v1h-1zM10 39h1v1h-1zM13 39h1v1h-1zM18 39h1v1h-1zM6 40h1v1h-1zM0 41h1v1h-1zM10 41h1v1h-1zM16 41h1v1h-1zM18 41h1v1h-1zM19 41h1v1h-1zM1 42h1v1h-1zM6 43h1v1h-1zM8 43h1v1h-1zM9 43h1v1h-1zM13 43h1v1h-1zM1 44h1v1h-1zM4 44h1v1h-1zM5 44h1v1h-1zM11 44h1v1h-1zM14 44h1v1h-1zM15 44h1v1h-1zM1 45h1v1h-1zM7 45h1v1h-1zM12 45h1v1h-1zM16 45h1v1h-1zM6 46h1v1h-1zM10 46h1v1h-1zM14 46h1v1h-1zM15 46h1v1h-1zM17 46h1v1h-1zM19 46h1v1h-1zM11 47h1v1h-1zM15 47h1v1h-1zM17 47h1v1h-1zM19 47h1v1h-1zM6 48h1v1h-1zM14 48h1v1h-1zM18 48h1v1h-1zM0 49h1v1h-1zM5 49h1v1h-1zM7 49h1v1h-1zM14 49h1v1h-1zM15 49h1v1h-1zM19 49h1v1h-1zM11 50h1v1h-1zM12 50h1v1h-1zM17 50h1v1h-1zM11 51h1v1h-1zM17 51h1v1h-1zM18 51h1v1h-1zM12 52h1v1h-1zM19 52h1v1h-1zM1 53h1v1h-1zM2 53h1v1h-1zM11 53h1v1h-1zM17 53h1v1h-1zM6 54h1v1h-1zM9 54h1v1h-1zM14 54h1v1h-1zM16 54h1v1h-1zM2 55h1v1h-1zM4 55h1v1h-1zM14 55h1v1h-1zM16 55h1v1h-1zM18 55h1v1h-1zM0 56h1v1h-1zM1 56h1v1h-1zM2 56h1v1h-1zM3 56h1v1h-1zM9 56h1v1h-1zM11 56h1v1h-1zM12 56h1v1h-1zM18 56h1v1h-1zM19 56h1v1h-1zM3 57h1v1h-1zM7 57h1v1h-1zM10 57h1v1h-1zM13 57h1v1h-1zM14 57h1v1h-1zM15 57h1v1h-1zM16 57h1v1h-1zM17 57h1v1h-1zM9 58h1v1h-1zM11 58h1v1h-1zM17 59h1v1h-1zM19 59h1v1h-1zM12 60h1v1h-1zM15 60h1v1h-1zM17 60h1v1h-1zM18 60h1v1h-1zM1 61h1v1h-1zM9 61h1v1h-1zM16 61h1v1h-1zM4 62h1v1h-1zM5 62h1v1h-1zM9 62h1v1h-1zM15 62h1v1h-1zM18 62h1v1h-1zM11 63h1v1h-1zM12 63h1v1h-1zM15 63h1v1h-1zM9 64h1v1h-1zM11 64h1v1h-1zM14 64h1v1h-1zM18 64h1v1h-1zM0 65h1v1h-1zM8 65h1v1h-1zM9 65h1v1h-1zM11 65h1v1h-1zM13 65h1v1h-1zM17 65h1v1h-1zM8 66h1v1h-1zM12 66h1v1h-1zM15 66h1v1h-1zM17 66h1v1h-1zM6 67h1v1h-1zM12 67h1v1h-1zM15 67h1v1h-1zM17 67h1v1h-1zM1 68h1v1h-1zM7 68h1v1h-1zM9 68h1v1h-1zM11 68h1v1h-1zM16 68h1v1h-1zM17 68h1v1h-1zM18 68h1v1h-1zM19 68h1v1h-1zM1 69h1v1h-1zM5 69h1v1h-1zM8 69h1v1h-1zM9 69h1v1h-1zM13 69h1v1h-1zM17 69h1v1h-1zM1 70h1v1h-1zM9 70h1v1h-1zM10 70h1v1h-1zM12 70h1v1h-1zM14 70h1v1h-1zM15 70h1v1h-1zM0 71h1v1h-1zM9 71h1v1h-1zM10 71h1v1h-1zM12 71h1v1h-1zM13 71h1v1h-1zM4 72h1v1h-1zM8 72h1v1h-1zM14 72h1v1h-1zM15 72h1v1h-1zM8 73h1v1h-1zM12 73h1v1h-1zM15 73h1v1h-1zM18 73h1v1h-1zM1 74h1v1h-1zM7 74h1v1h-1zM15 74h1v1h-1zM18 74h1v1h-1zM18 75h1v1h-1zM13 76h1v1h-1zM14 76h1v1h-1zM18 76h1v1h-1zM0 77h1v1h-1zM10 77h1v1h-1zM15 77h1v1h-1zM16 77h1v1h-1zM17 77h1v1h-1zM19 77h1v1h-1zM11 78h1v1h-1zM12 78h1v1h-1zM13 78h1v1h-1zM16 78h1v1h-1zM2 79h1v1h-1zM16 79h1v1h-1zM3 80h1v1h-1zM5 80h1v1h-1zM12 80h1v1h-1zM19 80h1v1h-1zM8 81h1v1h-1zM10 81h1v1h-1zM15 81h1v1h-1zM17 81h1v1h-1zM19 81h1v1h-1zM9 82h1v1h-1zM15 82h1v1h-1zM17 82h1v1h-1zM10 83h1v1h-1zM12 83h1v1h-1zM17 83h1v1h-1zM7 84h1v1h-1zM10 84h1v1h-1zM19 84h1v1h-1zM11 85h1v1h-1zM17 85h1v1h-1zM3 86h1v1h-1zM14 86h1v1h-1zM15 86h1v1h-1zM4 87h1v1h-1zM9 87h1v1h-1zM13 87h1v1h-1zM16 87h1v1h-1zM5 88h1v1h-1zM11 88h1v1h-1zM13 88h1v1h-1zM19 88h1v1h-1zM9 89h1v1h-1zM10 89h1v1h-1zM15 89h1v1h-1zM18 89h1v1h-1zM2 90h1v1h-1zM9 90h1v1h-1zM15 90h1v1h-1zM18 90h1v1h-1zM2 91h1v1h-1zM8 91h1v1h-1zM10 91h1v1h-1zM11 91h1v1h-1zM2 92h1v1h-1zM9 92h1v1h-1zM17 92h1v1h-1zM19 92h1v1h-1zM0 93h1v1h-1zM9 93h1v1h-1zM14 93h1v1h-1zM1 94h1v1h-1zM8 94h1v1h-1zM14 94h1v1h-1zM18 94h1v1h-1zM4 95h1v1h-1zM7 95h1v1h-1zM9 95h1v1h-1zM12 95h1v1h-1zM13 95h1v1h-1zM19 95h1v1h-1zM3 96h1v1h-1zM7 96h1v1h-1zM10 96h1v1h-1zM19 96h1v1h-1zM1 97h1v1h-1zM5 97h1v1h-1zM9 97h1v1h-1zM11 97h1v1h-1zM7 98h1v1h-1zM10 98h1v1h-1zM12 98h1v1h-1zM14 98h1v1h-1zM19 98h1v1h-1zM3 99h1v1h-1zM5 99h1v1h-1zM6 99h1v1h-1zM15 99h1v1h-1zM19 99h1v1h-1z"/><path fill="#9fc9d8" d="M15 20h1v1h-1zM9 22h1v1h-1zM14 23h1v1h-1zM3 26h1v1h-1zM10 26h1v1h-1zM7 27h1v1h-1zM9 28h1v1h-1zM12 28h1v1h-1zM10 30h1v1h-1zM8 31h1v1h-1zM15 31h1v1h-1zM17 32h1v1h-1zM9 34h1v1h-1zM12 34h1v1h-1zM2 35h1v1h-1zM19 36h1v1h-1zM12 38h1v1h-1zM16 38h1v1h-1zM14 39h1v1h-1zM7 40h1v1h-1zM13 41h1v1h-1zM14 41h1v1h-1zM16 42h1v1h-1zM0 43h1v1h-1zM10 43h1v1h-1zM17 44h1v1h-1zM17 45h1v1h-1zM9 46h1v1h-1zM18 46h1v1h-1zM9 47h1v1h-1zM10 50h1v1h-1zM5 51h1v1h-1zM14 51h1v1h-1zM6 52h1v1h-1zM17 52h1v1h-1zM7 53h1v1h-1zM10 53h1v1h-1zM9 55h1v1h-1zM13 56h1v1h-1zM5 57h1v1h-1zM18 57h1v1h-1zM17 58h1v1h-1zM19 58h1v1h-1zM4 59h1v1h-1zM7 59h1v1h-1zM11 59h1v1h-1zM18 59h1v1h-1zM0 60h1v1h-1zM11 60h1v1h-1zM17 61h1v1h-1zM14 63h1v1h-1zM16 63h1v1h-1zM10 65h1v1h-1zM3 66h1v1h-1zM9 66h1v1h-1zM13 66h1v1h-1zM8 67h1v1h-1zM10 67h1v1h-1zM3 71h1v1h-1zM15 71h1v1h-1zM17 71h1v1h-1zM19 72h1v1h-1zM1 73h1v1h-1zM10 73h1v1h-1zM19 73h1v1h-1zM15 75h1v1h-1zM5 77h1v1h-1zM13 77h1v1h-1zM4 79h1v1h-1zM6 80h1v1h-1zM10 80h1v1h-1zM13 80h1v1h-1zM14 80h1v1h-1zM2 81h1v1h-1zM4 81h1v1h-1zM6 81h1v1h-1zM4 82h1v1h-1zM10 82h1v1h-1zM1 83h1v1h-1zM8 83h1v1h-1zM14 84h1v1h-1zM12 86h1v1h-1zM18 86h1v1h-1zM5 87h1v1h-1zM11 87h1v1h-1zM16 90h1v1h-1zM0 91h1v1h-1zM12 92h1v1h-1zM5 93h1v1h-1zM16 93h1v1h-1zM17 93h1v1h-1zM2 95h1v1h-1zM10 95h1v1h-1zM14 95h1v1h-1zM17 95h1v1h-1zM0 97h1v1h-1zM14 97h1v1h-1zM15 97h1v1h-1z"/></svg><div style="position:absolute;left:20px;top:0px;width:1920px;height:40px;background:#18203f"></div><svg style="position:absolute;left:40px;top:8px;" width="21" height="25" viewBox="0 0 21 25" fill="none">
<path d="M0 14.3 L0 6.5 C0 2.8 2.8 0.1 6.2 0.1 L7.1 0.1 L7.1 10.6 C4.4 11 2 12.2 0 14.3 Z" fill="#5ad2f6"/>
<path d="M7.9 0 H13.2 C17.5 0 20.3 3.8 20.3 8.8 V11.5 C20.3 15.8 17.8 18.8 14.3 18.8 V6.2 H7.9 Z" fill="#4336ec"/>
<path d="M0 24 V18.5 C0 14.5 2.8 11.8 6.5 11.8 L12.6 11.8 V17.9 H7.1 V24 Z" fill="#a647f2"/>
</svg><div style="position:absolute;left:66px;top:9.5px;line-height:20px;font-size:21px;font-weight:400;color:#ffffff;white-space:nowrap;letter-spacing:0.9px;-webkit-text-stroke:0.45px #ffffff">Priority</div><div style="position:absolute;left:640px;top:8px;width:680px;height:24px;border:1.3px solid #d6d9ea;border-radius:4px;box-sizing:border-box"></div><div style="position:absolute;left:645px;top:10.3px;line-height:20px;font-size:13.6px;font-weight:400;color:#a9afc2;white-space:nowrap;font-style:italic">Search customers, parts, documents and more...</div><svg style="position:absolute;left:1294px;top:11px;" width="18" height="18" viewBox="0 0 18 18" fill="none"><circle cx="7.5" cy="7.5" r="5.8" stroke="#c9cede" stroke-width="1.8"/><path d="M11.8 11.8 L16 16" stroke="#c9cede" stroke-width="1.8" stroke-linecap="round"/></svg><svg style="position:absolute;left:1574px;top:8px;" width="22" height="24" viewBox="0 0 22 24" fill="none"><path d="M7.5 15.5 C5.5 14 4.8 12 4.8 10.3 C4.8 7 7.5 4.6 11 4.6 C14.5 4.6 17.2 7 17.2 10.3 C17.2 12 16.5 14 14.5 15.5 L14.5 18.5 L7.5 18.5 Z" stroke="#ffffff" stroke-width="1.7" stroke-linejoin="round"/><path d="M8.5 21 L13.5 21" stroke="#ffffff" stroke-width="1.7" stroke-linecap="round"/><path d="M11 0.5 V2.3 M3.2 3.2 L4.4 4.4 M18.8 3.2 L17.6 4.4 M0.5 10.5 H2.2 M19.8 10.5 H21.5" stroke="#ffffff" stroke-width="1.6" stroke-linecap="round"/></svg><svg style="position:absolute;left:1613px;top:8px;" width="21" height="23" viewBox="0 0 21 23" fill="none"><path d="M3.5 17.5 C4.8 15.5 4.8 13.5 4.8 9.8 C4.8 6 7.3 3 10.5 3 C13.7 3 16.2 6 16.2 9.8 C16.2 13.5 16.2 15.5 17.5 17.5 Z" stroke="#ffffff" stroke-width="1.7" stroke-linejoin="round"/><path d="M1.8 17.6 H19.2" stroke="#ffffff" stroke-width="1.7" stroke-linecap="round"/><path d="M10.5 1 V3" stroke="#ffffff" stroke-width="1.6"/><path d="M8.6 20 C9 21.3 12 21.3 12.4 20" stroke="#ffffff" stroke-width="1.6" stroke-linecap="round"/></svg><svg style="position:absolute;left:1650px;top:9px;" width="26" height="22" viewBox="0 0 26 22" fill="none"><path d="M12.5 4.5 V3.5 C12.5 2.6 13.2 2 14 2 H22.5 C23.3 2 24 2.6 24 3.5 V13.5 C24 14.4 23.3 15 22.5 15 H21" stroke="#ffffff" stroke-width="1.8"/><rect x="2.8" y="8.8" width="17" height="11" rx="1.6" fill="#18203f" stroke="#0d1226" stroke-width="3.5"/><rect x="2.8" y="8.8" width="17" height="11" rx="1.6" stroke="#ffffff" stroke-width="1.8"/></svg><div style="position:absolute;left:1645px;top:7px;width:18px;height:16px;border-radius:9px;background:#4038e6;color:#fff;font-size:11.5px;font-weight:700;line-height:16px;text-align:center">2</div><svg style="position:absolute;left:1689px;top:10px;" width="25" height="20" viewBox="0 0 25 20" fill="none"><rect x="1" y="1.5" width="23" height="17" rx="2.5" stroke="#ffffff" stroke-width="1.8"/><path d="M7.5 5.5 L8.7 8.2 L11.5 8.4 L9.4 10.3 L10 13.2 L7.5 11.7 L5 13.2 L5.6 10.3 L3.5 8.4 L6.3 8.2 Z" fill="#ffffff"/><path d="M13.5 8.5 H20.5 M13.5 12 H20.5" stroke="#ffffff" stroke-width="1.9"/></svg><div style="position:absolute;left:1734px;top:10.0px;line-height:20px;font-size:12.2px;font-weight:700;color:#ffffff;white-space:nowrap;">User Name</div><svg style="position:absolute;left:1819px;top:9px;" width="22" height="22" viewBox="0 0 22 22" fill="none"><circle cx="11" cy="11" r="9.6" stroke="#ffffff" stroke-width="1.7"/><path d="M8 8.5 C8 6.5 9.3 5.5 11 5.5 C12.8 5.5 14 6.6 14 8.2 C14 10.2 11.2 10.5 11.2 12.8" stroke="#ffffff" stroke-width="1.8" stroke-linecap="round"/><circle cx="11.2" cy="15.8" r="1.1" fill="#ffffff"/></svg><svg style="position:absolute;left:1859px;top:13px;" width="19" height="16" viewBox="0 0 19 16" fill="none"><path d="M0.5 1.5 H18.5 M0.5 8 H18.5 M0.5 14.5 H18.5" stroke="#ffffff" stroke-width="1.9"/></svg><svg style="position:absolute;left:1900px;top:16px;" width="15" height="10" viewBox="0 0 15 10" fill="none"><path d="M1 1.5 L7.5 8 L14 1.5" stroke="#ffffff" stroke-width="1.8"/></svg><div style="position:absolute;left:20px;top:40px;width:1920px;height:40px;background:#ffffff"></div><svg style="position:absolute;left:43px;top:50px;" width="18" height="18" viewBox="0 0 18 18" fill="none"><circle cx="7.5" cy="7.5" r="5.9" stroke="#6b7a86" stroke-width="2"/><path d="M11.8 11.8 L16 16" stroke="#6b7a86" stroke-width="2" stroke-linecap="round"/></svg><div style="position:absolute;left:94px;top:50.0px;line-height:20px;font-size:14.5px;font-weight:400;color:#232a38;white-space:nowrap;">Financials</div><div style="position:absolute;left:190px;top:50.0px;line-height:20px;font-size:14.5px;font-weight:400;color:#232a38;white-space:nowrap;">CRM</div><div style="position:absolute;left:250px;top:50.0px;line-height:20px;font-size:14.5px;font-weight:400;color:#232a38;white-space:nowrap;">Sales</div><div style="position:absolute;left:315px;top:50.0px;line-height:20px;font-size:14.5px;font-weight:400;color:#232a38;white-space:nowrap;">Project Management</div><div style="position:absolute;left:481px;top:50.0px;line-height:20px;font-size:14.5px;font-weight:400;color:#232a38;white-space:nowrap;">Purchasing</div><div style="position:absolute;left:585px;top:50.0px;line-height:20px;font-size:14.5px;font-weight:400;color:#232a38;white-space:nowrap;">Inventory</div><div style="position:absolute;left:678px;top:50.0px;line-height:20px;font-size:14.5px;font-weight:400;color:#232a38;white-space:nowrap;">Customer Service</div><div style="position:absolute;left:824px;top:50.0px;line-height:20px;font-size:14.5px;font-weight:400;color:#232a38;white-space:nowrap;">Production</div><div style="position:absolute;left:927px;top:50.0px;line-height:20px;font-size:14.5px;font-weight:400;color:#232a38;white-space:nowrap;">Human Resources</div><div style="position:absolute;left:1076px;top:50.0px;line-height:20px;font-size:14.5px;font-weight:400;color:#232a38;white-space:nowrap;">Office Management</div><div style="position:absolute;left:1232px;top:50.0px;line-height:20px;font-size:14.5px;font-weight:400;color:#232a38;white-space:nowrap;">Executive Reports</div><div style="position:absolute;left:1381px;top:50.0px;line-height:20px;font-size:14.5px;font-weight:400;color:#232a38;white-space:nowrap;">System Management</div><div style="position:absolute;left:1787px;top:48px;width:132px;height:24px;border-radius:4px;background:#3d35e0;color:#fff;font-size:11.6px;font-weight:700;line-height:24px;text-align:center;letter-spacing:0.1px">WORKING COMPANY</div><div style="position:absolute;left:20px;top:80px;width:1920px;height:98px;background:linear-gradient(#f4f5f6 0px,#fafafa 7px,#ffffff 13px)"></div><div style="position:absolute;left:45px;top:94.0px;line-height:20px;font-size:26px;font-weight:400;color:#353c4a;white-space:nowrap;">Price Quotation For Customers</div><svg style="position:absolute;left:1187px;top:94px;" width="20" height="20" viewBox="0 0 20 20" fill="none"><path d="M1.5 1.5 H18.5 L12 9.5 V17.5 C12 18.5 11 19 10 19 C9 19 8 18.5 8 17.5 V9.5 Z" stroke="#2b3240" stroke-width="1.5" stroke-linejoin="round"/></svg><div style="position:absolute;left:1214px;top:94.0px;line-height:20px;font-size:14.4px;font-weight:400;color:#2a3140;white-space:nowrap;">Saved search</div><svg style="position:absolute;left:1311px;top:99px;" width="13" height="9" viewBox="0 0 13 9" fill="none"><path d="M1 1.5 L6.5 7 L12 1.5" stroke="#6f7580" stroke-width="1.4"/></svg><div style="position:absolute;left:1350px;top:82px;width:1px;height:43px;background:#e3e5e9"></div><svg style="position:absolute;left:1366px;top:94px;" width="25" height="18" viewBox="0 0 25 18" fill="none"><rect x="3" y="1" width="19" height="16" rx="3" stroke="#2b3240" stroke-width="1.7"/><path d="M3 6 H1 V12 H3 M22 6 H24 V12 H22" stroke="#2b3240" stroke-width="1.7"/><circle cx="8.5" cy="6.5" r="1.5" stroke="#2b3240" stroke-width="1.2"/><circle cx="16.5" cy="6.5" r="1.5" stroke="#2b3240" stroke-width="1.2"/><path d="M10 11 C11.5 12.5 13.5 12.5 15 11" stroke="#2b3240" stroke-width="1.3"/></svg><div style="position:absolute;left:1398px;top:94.0px;line-height:20px;font-size:17px;font-weight:400;color:#262d3b;white-space:nowrap;">Automations</div><svg style="position:absolute;left:1508px;top:100px;" width="14" height="9" viewBox="0 0 14 9" fill="none"><path d="M0.5 0.5 H13.5 L7 8 Z" fill="#1d2333"/></svg><div style="position:absolute;left:1550px;top:82px;width:1px;height:43px;background:#e3e5e9"></div><svg style="position:absolute;left:1568px;top:94px;" width="22" height="21" viewBox="0 0 22 21" fill="none"><path d="M5 6 V1.5 H17 V6" stroke="#2b3240" stroke-width="1.6"/><path d="M5 15.5 H2.5 C1.7 15.5 1 14.8 1 14 V7.5 C1 6.7 1.7 6 2.5 6 H19.5 C20.3 6 21 6.7 21 7.5 V14 C21 14.8 20.3 15.5 19.5 15.5 H17" stroke="#2b3240" stroke-width="1.6"/><rect x="5.5" y="11.5" width="11" height="8.5" stroke="#2b3240" stroke-width="1.6"/><path d="M8 14.5 V17.5 H9.5 M11 14.8 H14.5 M11 17.2 H14.5" stroke="#2b3240" stroke-width="1.2"/><circle cx="4.5" cy="9.2" r="1" fill="#2b3240"/></svg><div style="position:absolute;left:1600px;top:94.0px;line-height:20px;font-size:16.8px;font-weight:400;color:#262d3b;white-space:nowrap;">Print Labels</div><svg style="position:absolute;left:1715px;top:94px;" width="20" height="19" viewBox="0 0 20 19" fill="none"><rect x="1" y="1" width="18" height="17" rx="2" stroke="#2b3240" stroke-width="1.4"/><path d="M1 5 H19" stroke="#2b3240" stroke-width="1.3"/><path d="M4 9 H10 M4 12.5 H8 M4 15.5 H8" stroke="#2b3240" stroke-width="1.3"/><circle cx="13" cy="12.5" r="2.6" stroke="#2b3240" stroke-width="1.3"/><path d="M15 14.5 L17.5 17" stroke="#2b3240" stroke-width="1.4"/></svg><svg style="position:absolute;left:1743px;top:94px;" width="20" height="19" viewBox="0 0 20 19" fill="none"><rect x="1" y="1" width="18" height="17" rx="3" stroke="#2b3240" stroke-width="1.4"/><path d="M7 1 V18 M10 1 V18 M13 1 V18" stroke="#2b3240" stroke-width="1.3"/></svg><svg style="position:absolute;left:1770px;top:93px;" width="22" height="21" viewBox="0 0 22 21" fill="none"><path d="M11 1 L13.7 7.6 L20.8 8.1 L15.4 12.7 L17.1 19.7 L11 15.9 L4.9 19.7 L6.6 12.7 L1.2 8.1 L8.3 7.6 Z" fill="#3b35e0" stroke="#3b35e0" stroke-width="1" stroke-linejoin="round"/></svg><svg style="position:absolute;left:1799px;top:94px;" width="21" height="19" viewBox="0 0 21 19" fill="none"><rect x="6" y="1" width="14" height="17" stroke="#2b3240" stroke-width="1.4"/><path d="M6 5.5 H20 M6 9.5 H20 M6 13.5 H20 M13 1 V18" stroke="#2b3240" stroke-width="1.2"/><rect x="0.5" y="3.5" width="10" height="12" fill="#2b3240"/><path d="M3 6.5 L8 12.5 M8 6.5 L3 12.5" stroke="#fff" stroke-width="1.5"/></svg><svg style="position:absolute;left:1831px;top:95px;" width="19" height="19" viewBox="0 0 19 19" fill="none"><path d="M7.47 3.85 L7.67 1.30 L11.33 1.30 L11.53 3.85 L13.37 4.92 L15.68 3.81 L17.52 6.99 L15.41 8.44 L15.41 10.56 L17.52 12.01 L15.68 15.19 L13.37 14.08 L11.53 15.15 L11.33 17.70 L7.67 17.70 L7.47 15.15 L5.63 14.08 L3.32 15.19 L1.48 12.01 L3.59 10.56 L3.59 8.44 L1.48 6.99 L3.32 3.81 L5.63 4.92 Z" stroke="#2b3240" stroke-width="1.4" stroke-linejoin="round"/><circle cx="9.5" cy="9.5" r="2.6" stroke="#2b3240" stroke-width="1.4"/></svg><div style="position:absolute;left:1859px;top:88px;width:1px;height:33px;background:#e3e5e9"></div><svg style="position:absolute;left:1866px;top:94px;" width="19" height="19" viewBox="0 0 19 19" fill="none"><circle cx="9.5" cy="9.5" r="8.5" stroke="#2b3240" stroke-width="1.3"/><path d="M7 7.5 C7 5.8 8 5 9.5 5 C11 5 12 5.9 12 7.2 C12 8.9 9.7 9.2 9.7 11.2" stroke="#2b3240" stroke-width="1.4" stroke-linecap="round"/><circle cx="9.7" cy="13.8" r="0.9" fill="#2b3240"/></svg><svg style="position:absolute;left:1897px;top:97px;" width="14" height="14" viewBox="0 0 14 14" fill="none"><path d="M1 1 L13 13 M13 1 L1 13" stroke="#2b3240" stroke-width="1.4"/></svg><div style="position:absolute;left:44px;top:138px;width:110px;height:30px;border-radius:6px;background:#3d35e0;color:#fff;font-size:13.8px;font-weight:700;line-height:31px;text-align:center">New</div><div style="position:absolute;left:162px;top:138px;width:168px;height:30px;border:1px solid #d3d6dc;border-radius:6px;box-sizing:border-box;background:#fff"></div><svg style="position:absolute;left:176px;top:143px;" width="20" height="21" viewBox="0 0 20 21" fill="none"><path d="M1.5 1.5 H18.5 L12 9.5 V18 C12 19 11 19.6 10 19.6 C9 19.6 8 19 8 18 V9.5 Z" stroke="#2b3240" stroke-width="1.5" stroke-linejoin="round"/></svg><div style="position:absolute;left:202px;top:143.0px;line-height:20px;font-size:14.7px;font-weight:400;color:#262d3b;white-space:nowrap;">Advanced Search</div><div style="position:absolute;left:1361px;top:138px;width:158px;height:30px;border:1px solid #dcdfe4;border-radius:7px;box-sizing:border-box;background:#fff"></div><div style="position:absolute;left:1361px;top:138px;width:28px;height:30px;border-radius:7px 0 0 7px;background:#62c3f2"></div><svg style="position:absolute;left:1364px;top:141px;" width="22" height="24" viewBox="0 0 22 24" fill="none"><path d="M7 3 H17 C18.5 3 19 4 19 5 V6.5 H15.5 V19 C15.5 20.5 14.5 21 13.5 21 H5 C3.5 21 3 20 3 19 V17.5 H6.5 V5 C6.5 4 7 3 8 3" stroke="#fff" stroke-width="1.3" stroke-linejoin="round"/><path d="M9 8 H13 M9 11 H13 M9 14 H12" stroke="#fff" stroke-width="1.2"/></svg><div style="position:absolute;left:1396px;top:143.0px;line-height:20px;font-size:14.6px;font-weight:400;color:#262d3b;white-space:nowrap;">Prepare Sales In<span style="letter-spacing:-0.9px">...</span></div><div style="position:absolute;left:1529px;top:138px;width:160px;height:30px;border:1px solid #dcdfe4;border-radius:7px;box-sizing:border-box;background:#fff"></div><div style="position:absolute;left:1529px;top:138px;width:28px;height:30px;border-radius:7px 0 0 7px;background:#5dbd70"></div><svg style="position:absolute;left:1532px;top:141px;" width="22" height="24" viewBox="0 0 22 24" fill="none"><path d="M19.00 7.50 L20.58 8.03 L20.05 9.92 L18.43 9.56 L17.83 10.33 L18.57 11.81 L16.86 12.78 L15.96 11.38 L15.00 11.50 L14.47 13.08 L12.58 12.55 L12.94 10.93 L12.17 10.33 L10.69 11.07 L9.72 9.36 L11.12 8.46 L11.00 7.50 L9.42 6.97 L9.95 5.08 L11.57 5.44 L12.17 4.67 L11.43 3.19 L13.14 2.22 L14.04 3.62 L15.00 3.50 L15.53 1.92 L17.42 2.45 L17.06 4.07 L17.83 4.67 L19.31 3.93 L20.28 5.64 L18.88 6.54 Z" stroke="#ffffff" stroke-width="1.1" stroke-linejoin="round"/><circle cx="15" cy="7.5" r="1.7" stroke="#ffffff" stroke-width="1.1"/><path d="M12.00 16.00 L13.67 16.58 L13.09 18.68 L11.36 18.32 L10.68 19.18 L11.45 20.78 L9.55 21.85 L8.58 20.37 L7.50 20.50 L6.92 22.17 L4.82 21.59 L5.18 19.86 L4.32 19.18 L2.72 19.95 L1.65 18.05 L3.13 17.08 L3.00 16.00 L1.33 15.42 L1.91 13.32 L3.64 13.68 L4.32 12.82 L3.55 11.22 L5.45 10.15 L6.42 11.63 L7.50 11.50 L8.08 9.83 L10.18 10.41 L9.82 12.14 L10.68 12.82 L12.28 12.05 L13.35 13.95 L11.87 14.92 Z" stroke="#ffffff" stroke-width="1.1" stroke-linejoin="round"/><circle cx="7.5" cy="16" r="1.9" stroke="#ffffff" stroke-width="1.1"/></svg><div style="position:absolute;left:1564px;top:143.0px;line-height:20px;font-size:14.6px;font-weight:400;color:#262d3b;white-space:nowrap;">Prepare Shippin<span style="letter-spacing:-0.9px">...</span></div><div style="position:absolute;left:1698px;top:138px;width:100px;height:30px;border:1px solid #dcdfe4;border-radius:7px;box-sizing:border-box;background:#fff"></div><div style="position:absolute;left:1710px;top:143.0px;line-height:20px;font-size:15px;font-weight:400;color:#262d3b;white-space:nowrap;">Actions</div><svg style="position:absolute;left:1769px;top:149px;" width="13" height="9" viewBox="0 0 13 9" fill="none"><path d="M1 1.5 L6.5 7 L12 1.5" stroke="#6f7580" stroke-width="1.4"/></svg><div style="position:absolute;left:1802px;top:137px;width:1px;height:31px;background:#dfe2e6"></div><svg style="position:absolute;left:1805px;top:144px;" width="18" height="18" viewBox="0 0 18 18" fill="none"><path d="M2 1.5 V6.5 H7" stroke="#2b3240" stroke-width="1.4"/><path d="M2.3 6.2 C4 3.5 6.5 2 9 2 C13 2 16 5 16 9 C16 12 14.5 14.5 11.5 16.5" stroke="#2b3240" stroke-width="1.4"/></svg><svg style="position:absolute;left:1833px;top:144px;" width="17" height="19" viewBox="0 0 17 19" fill="none"><path d="M0.8 4.2 H16.2" stroke="#2b3240" stroke-width="1.3"/><path d="M5.5 4 V1.8 H11.5 V4" stroke="#2b3240" stroke-width="1.2"/><path d="M3 4.2 V16.8 C3 17.4 3.4 17.8 4 17.8 H13 C13.6 17.8 14 17.4 14 16.8 V4.2" stroke="#2b3240" stroke-width="1.3"/><path d="M6.2 7.2 V15 M8.5 7.2 V15 M10.8 7.2 V15" stroke="#2b3240" stroke-width="1.1"/></svg><svg style="position:absolute;left:1862px;top:143px;" width="18" height="19" viewBox="0 0 18 19" fill="none"><path d="M6 7 H2.5 V17.5 H15.5 V7 H12" stroke="#2b3240" stroke-width="1.4" stroke-linejoin="round"/><path d="M9 12 V1.5 M5.5 5 L9 1.5 L12.5 5" stroke="#2b3240" stroke-width="1.4"/></svg><svg style="position:absolute;left:1892px;top:143px;" width="18" height="20" viewBox="0 0 18 20" fill="none"><path d="M2.5 15 C3.5 13.5 3.8 12 3.8 9 C3.8 5.5 6 3 9 3 C12 3 14.2 5.5 14.2 9 C14.2 12 14.5 13.5 15.5 15 Z" stroke="#2b3240" stroke-width="1.4" stroke-linejoin="round"/><path d="M1.5 15 H16.5" stroke="#2b3240" stroke-width="1.4"/><path d="M7.5 17.5 L9 19 L10.5 17.5 Z" fill="#2b3240" stroke="#2b3240" stroke-width="1"/><path d="M9 1 V3" stroke="#2b3240" stroke-width="1.2"/><circle cx="14" cy="3.5" r="2.6" fill="#3d35e0"/></svg><div style="position:absolute;left:1915px;top:138px;width:1px;height:30px;background:#dfe2e6"></div><div style="position:absolute;left:20px;top:178px;width:1920px;height:862px;background:#f3f4f6"></div><div style="position:absolute;left:30px;top:188px;width:1900px;height:900px;border:1px solid #e3e5e9;border-radius:0 11px 0 0;box-sizing:border-box;background:#f5f6f8"></div><div style="position:absolute;left:31px;top:189px;width:1875px;height:366px;background:#ffffff"></div><div style="position:absolute;left:54px;top:218.0px;line-height:20px;font-size:14.9px;font-weight:400;color:#262d3b;white-space:nowrap;">Customer No.<span style="color:#e8675a;font-size:16px;margin-left:2px">*</span></div><div style="position:absolute;left:294px;top:212px;width:340px;height:32px;border:1px solid #c8cbd0;border-radius:4px;box-sizing:border-box;background:#ffffff"></div><div style="position:absolute;left:302px;top:218.0px;line-height:20px;font-size:14.6px;font-weight:400;color:#d3d6db;white-space:nowrap;">Hint</div><svg style="position:absolute;left:607px;top:223px;" width="14" height="10" viewBox="0 0 14 10" fill="none"><path d="M1.5 2 L7 7.5 L12.5 2" stroke="#2b3240" stroke-width="1.5"/></svg><div style="position:absolute;left:54px;top:266.0px;line-height:20px;font-size:14.9px;font-weight:400;color:#262d3b;white-space:nowrap;">Customer Name</div><div style="position:absolute;left:294px;top:260px;width:166px;height:32px;border:1px solid #c8cbd0;border-radius:4px;box-sizing:border-box;background:#ffffff"></div><div style="position:absolute;left:302px;top:266.0px;line-height:20px;font-size:14.6px;font-weight:400;color:#262c38;white-space:nowrap;">Example</div><div style="position:absolute;left:468px;top:260px;width:166px;height:32px;border:1px solid #c8cbd0;border-radius:4px;box-sizing:border-box;background:#ffffff"></div><div style="position:absolute;left:476px;top:266.0px;line-height:20px;font-size:14.6px;font-weight:400;color:#262c38;white-space:nowrap;">Example</div><div style="position:absolute;left:54px;top:314.0px;line-height:20px;font-size:14.9px;font-weight:400;color:#262d3b;white-space:nowrap;">Contact</div><div style="position:absolute;left:294px;top:308px;width:340px;height:32px;border:1.5px solid #4a44cc;border-radius:4px;box-sizing:border-box;background:#fff"></div><div style="position:absolute;left:540px;top:310px;width:30px;height:28px;background:linear-gradient(90deg,rgba(255,255,255,0),#ececee)"></div><div style="position:absolute;left:302px;top:314.0px;line-height:20px;font-size:14.6px;font-weight:400;color:#262c38;white-space:nowrap;">Focus</div><div style="position:absolute;left:570px;top:308px;width:64px;height:32px;background:#3d35e0;border-radius:0 4px 4px 0"></div><div style="position:absolute;left:601px;top:308px;width:1px;height:32px;background:#6a64e8"></div><svg style="position:absolute;left:577px;top:315px;" width="18" height="18" viewBox="0 0 18 18" fill="none"><rect x="2.5" y="1.5" width="13" height="15" rx="1.5" stroke="#fff" stroke-width="1.4"/><path d="M5.5 6 H12.5 M5.5 9 H12.5 M5.5 12 H12.5" stroke="#fff" stroke-width="1.4"/></svg><svg style="position:absolute;left:607px;top:313px;" width="22" height="22" viewBox="0 0 22 22" fill="none"><circle cx="11" cy="11" r="9.3" stroke="#fff" stroke-width="1.5"/><circle cx="11" cy="6.5" r="1.3" fill="#fff"/><path d="M11 9.5 V16.5" stroke="#fff" stroke-width="2"/></svg><div style="position:absolute;left:54px;top:362.0px;line-height:20px;font-size:14.9px;font-weight:400;color:#262d3b;white-space:nowrap;">Disable</div><div style="position:absolute;left:294px;top:356px;width:340px;height:32px;border:1px solid #c8cbd0;border-radius:4px;box-sizing:border-box;background:#f3f4f6"></div><div style="position:absolute;left:54px;top:410.0px;line-height:20px;font-size:14.9px;font-weight:400;color:#262d3b;white-space:nowrap;">Date<span style="color:#e8675a;font-size:16px;margin-left:2px">*</span></div><div style="position:absolute;left:294px;top:404px;width:340px;height:32px;border:1px solid #c8cbd0;border-radius:4px;box-sizing:border-box;background:#ffffff"></div><div style="position:absolute;left:302px;top:410.0px;line-height:20px;font-size:14.6px;font-weight:400;color:#262c38;white-space:nowrap;">08/23/23</div><div style="position:absolute;left:54px;top:458.0px;line-height:20px;font-size:14.9px;font-weight:400;color:#262d3b;white-space:nowrap;">Order No.<span style="color:#e8675a;font-size:16px;margin-left:2px">*</span></div><div style="position:absolute;left:294px;top:452px;width:340px;height:32px;border:1px solid #c8cbd0;border-radius:4px;box-sizing:border-box;background:#ffffff"></div><div style="position:absolute;left:302px;top:458.0px;line-height:20px;font-size:14.6px;font-weight:400;color:#262c38;white-space:nowrap;">Example</div><div style="position:absolute;left:54px;top:506.0px;line-height:20px;font-size:14.9px;font-weight:400;color:#262d3b;white-space:nowrap;">Status<span style="color:#e8675a;font-size:16px;margin-left:2px">*</span></div><div style="position:absolute;left:294px;top:500px;width:340px;height:32px;border:1px solid #c8cbd0;border-radius:4px;box-sizing:border-box;background:#ffffff"></div><div style="position:absolute;left:302px;top:508px;width:16px;height:16px;border-radius:50%;background:#f79d45"></div><div style="position:absolute;left:322px;top:506.0px;line-height:20px;font-size:15.4px;font-weight:400;color:#262c38;white-space:nowrap;">Status with dot</div><div style="position:absolute;left:764px;top:212px;width:1118px;height:32px;border-top:1px solid #f4f5f7;border-bottom:1px solid #f1f2f4;border-right:1px solid #f4f5f7;box-sizing:border-box"></div><div style="position:absolute;left:706px;top:213.5px;line-height:20px;font-size:14.8px;font-weight:400;color:#4a45c9;white-space:nowrap;">Price</div><div style="position:absolute;left:682px;top:242px;width:82px;height:2px;background:#4a45c9"></div><div style="position:absolute;left:788px;top:217.5px;line-height:20px;font-size:14.6px;font-weight:400;color:#6c7079;white-space:nowrap;">References</div><div style="position:absolute;left:912px;top:217.5px;line-height:20px;font-size:14.6px;font-weight:400;color:#6c7079;white-space:nowrap;">Project</div><div style="position:absolute;left:1008px;top:217.5px;line-height:20px;font-size:14.6px;font-weight:400;color:#6c7079;white-space:nowrap;">Approval anf Follow-up</div><div style="position:absolute;left:1210px;top:217.5px;line-height:20px;font-size:14.6px;font-weight:400;color:#6c7079;white-space:nowrap;">Scheduling</div><div style="position:absolute;left:1333px;top:217.5px;line-height:20px;font-size:14.6px;font-weight:400;color:#6c7079;white-space:nowrap;">Payment Info</div><div style="position:absolute;left:1470px;top:217.5px;line-height:20px;font-size:14.6px;font-weight:400;color:#6c7079;white-space:nowrap;">Shipment</div><div style="position:absolute;left:1582px;top:217.5px;line-height:20px;font-size:14.6px;font-weight:400;color:#6c7079;white-space:nowrap;">Misc.</div><div style="position:absolute;left:682px;top:266.0px;line-height:20px;font-size:14.9px;font-weight:400;color:#262d3b;white-space:nowrap;">Total Before Discount</div><div style="position:absolute;left:922px;top:260px;width:340px;height:32px;border:1px solid #c8cbd0;border-radius:4px;box-sizing:border-box;background:#f3f4f6"></div><div style="position:absolute;left:930px;top:266.0px;line-height:20px;font-size:14.6px;font-weight:400;color:#5d636d;white-space:nowrap;">54,949.91</div><div style="position:absolute;left:682px;top:314.0px;line-height:20px;font-size:14.9px;font-weight:400;color:#262d3b;white-space:nowrap;">Lable<span style="color:#e8675a;font-size:16px;margin-left:2px">*</span></div><div style="position:absolute;left:922px;top:308px;width:340px;height:32px;border:1px solid #c8cbd0;border-radius:4px;box-sizing:border-box;background:#ffffff"></div><div style="position:absolute;left:930px;top:314.0px;line-height:20px;font-size:14.6px;font-weight:400;color:#262c38;white-space:nowrap;">Example</div><div style="position:absolute;left:682px;top:362.0px;line-height:20px;font-size:14.9px;font-weight:400;color:#262d3b;white-space:nowrap;">Disable</div><div style="position:absolute;left:922px;top:356px;width:340px;height:32px;border:1px solid #c8cbd0;border-radius:4px;box-sizing:border-box;background:#f3f4f6"></div><div style="position:absolute;left:930px;top:362.0px;line-height:20px;font-size:14.6px;font-weight:400;color:#5d636d;white-space:nowrap;">54,949.91</div><div style="position:absolute;left:682px;top:410.0px;line-height:20px;font-size:14.9px;font-weight:400;color:#262d3b;white-space:nowrap;">Sales Tax</div><div style="position:absolute;left:922px;top:404px;width:340px;height:32px;border:1px solid #c8cbd0;border-radius:4px;box-sizing:border-box;background:#f3f4f6"></div><div style="position:absolute;left:930px;top:410.0px;line-height:20px;font-size:14.6px;font-weight:400;color:#5d636d;white-space:nowrap;">9,439.09</div><div style="position:absolute;left:682px;top:458.0px;line-height:20px;font-size:14.9px;font-weight:400;color:#262d3b;white-space:nowrap;">Final Price</div><div style="position:absolute;left:922px;top:452px;width:340px;height:32px;border:1px solid #c8cbd0;border-radius:4px;box-sizing:border-box;background:#ffffff"></div><div style="position:absolute;left:930px;top:458.0px;line-height:20px;font-size:14.6px;font-weight:400;color:#262c38;white-space:nowrap;">64,389.00</div><div style="position:absolute;left:682px;top:506.0px;line-height:20px;font-size:14.9px;font-weight:400;color:#262d3b;white-space:nowrap;">Currency<span style="color:#e8675a;font-size:16px;margin-left:2px">*</span></div><div style="position:absolute;left:922px;top:500px;width:340px;height:32px;border:1px solid #c8cbd0;border-radius:4px;box-sizing:border-box;background:#ffffff"></div><div style="position:absolute;left:930px;top:506.0px;line-height:20px;font-size:14.6px;font-weight:400;color:#262c38;white-space:nowrap;">NIS</div><div style="position:absolute;left:1302px;top:266.0px;line-height:20px;font-size:14.9px;font-weight:400;color:#262d3b;white-space:nowrap;">Purchase Price</div><div style="position:absolute;left:1542px;top:260px;width:340px;height:32px;border:1px solid #c8cbd0;border-radius:4px;box-sizing:border-box;background:#f3f4f6"></div><div style="position:absolute;left:1302px;top:314.0px;line-height:20px;font-size:14.9px;font-weight:400;color:#262d3b;white-space:nowrap;">Profit</div><div style="position:absolute;left:1542px;top:308px;width:340px;height:32px;border:1px solid #c8cbd0;border-radius:4px;box-sizing:border-box;background:#f3f4f6"></div><div style="position:absolute;left:1550px;top:314.0px;line-height:20px;font-size:14.6px;font-weight:400;color:#5d636d;white-space:nowrap;">54,949.91</div><div style="position:absolute;left:1302px;top:362.0px;line-height:20px;font-size:14.9px;font-weight:400;color:#262d3b;white-space:nowrap;">Profit (%)</div><div style="position:absolute;left:1542px;top:356px;width:340px;height:32px;border:1px solid #c8cbd0;border-radius:4px;box-sizing:border-box;background:#f3f4f6"></div><div style="position:absolute;left:1550px;top:362.0px;line-height:20px;font-size:14.6px;font-weight:400;color:#5d636d;white-space:nowrap;">9,439.09</div><div style="position:absolute;left:1302px;top:410.0px;line-height:20px;font-size:14.9px;font-weight:400;color:#262d3b;white-space:nowrap;">Product Bundle</div><div style="position:absolute;left:1542px;top:404px;width:340px;height:32px;border:1px solid #c8cbd0;border-radius:4px;box-sizing:border-box;background:#ffffff"></div><div style="position:absolute;left:1550px;top:410.0px;line-height:20px;font-size:14.6px;font-weight:400;color:#d3d6db;white-space:nowrap;">Hint</div><svg style="position:absolute;left:1855px;top:415px;" width="14" height="10" viewBox="0 0 14 10" fill="none"><path d="M1.5 2 L7 7.5 L12.5 2" stroke="#2b3240" stroke-width="1.5"/></svg><div style="position:absolute;left:1302px;top:458.0px;line-height:20px;font-size:14.9px;font-weight:400;color:#262d3b;white-space:nowrap;">Product Bundle Qty</div><div style="position:absolute;left:1542px;top:452px;width:340px;height:32px;border:1px solid #c8cbd0;border-radius:4px;box-sizing:border-box;background:#ffffff"></div><div style="position:absolute;left:1550px;top:458.0px;line-height:20px;font-size:14.6px;font-weight:400;color:#262c38;white-space:nowrap;">64,389.00</div><div style="position:absolute;left:1302px;top:503.0px;line-height:20px;font-size:14.9px;font-weight:400;color:#262d3b;white-space:nowrap;">Checkbox</div><div style="position:absolute;left:1544px;top:503px;width:20px;height:20px;border:1.3px solid #cfd2d7;border-radius:3px;box-sizing:border-box;background:#fff"></div><div style="position:absolute;left:45px;top:566px;width:163px;height:45px;background:#fff;border-radius:10px 10px 0 0;box-shadow:-2px -1px 4px rgba(0,0,0,0.04)"></div><div style="position:absolute;left:-73.5px;width:400px;text-align:center;top:576.0px;line-height:20px;font-size:14.8px;font-weight:700;color:#3d35c8;white-space:nowrap;">Itemized Quotation</div><div style="position:absolute;left:214px;top:566px;width:167px;height:40px;background:#dfe2e6;border-radius:9px 9px 0 0"></div><div style="position:absolute;left:97.5px;width:400px;text-align:center;top:576.0px;line-height:20px;font-size:15.0px;font-weight:400;color:#2a313e;white-space:nowrap;">Price Quote Versions</div><div style="position:absolute;left:386px;top:566px;width:145px;height:40px;background:#dfe2e6;border-radius:9px 9px 0 0"></div><div style="position:absolute;left:258.5px;width:400px;text-align:center;top:576.0px;line-height:20px;font-size:15.0px;font-weight:400;color:#2a313e;white-space:nowrap;">Shipping Address</div><div style="position:absolute;left:537px;top:566px;width:181px;height:40px;background:#dfe2e6;border-radius:9px 9px 0 0"></div><div style="position:absolute;left:427.5px;width:400px;text-align:center;top:576.0px;line-height:20px;font-size:15.0px;font-weight:400;color:#2a313e;white-space:nowrap;">Orders Based on Quote</div><div style="position:absolute;left:724px;top:566px;width:226px;height:40px;background:#dfe2e6;border-radius:9px 9px 0 0"></div><div style="position:absolute;left:637.0px;width:400px;text-align:center;top:576.0px;line-height:20px;font-size:15.0px;font-weight:400;color:#2a313e;white-space:nowrap;">Price Quotation Authorization</div><div style="position:absolute;left:955px;top:566px;width:228px;height:40px;background:#dfe2e6;border-radius:9px 9px 0 0"></div><div style="position:absolute;left:869.0px;width:400px;text-align:center;top:576.0px;line-height:20px;font-size:15.0px;font-weight:400;color:#2a313e;white-space:nowrap;">Reason to Decline Price Quote</div><div style="position:absolute;left:1189px;top:566px;width:198px;height:40px;background:#dfe2e6;border-radius:9px 9px 0 0"></div><div style="position:absolute;left:1088.0px;width:400px;text-align:center;top:576.0px;line-height:20px;font-size:15.0px;font-weight:400;color:#2a313e;white-space:nowrap;">Costs Specific to this Job</div><div style="position:absolute;left:1884px;top:566px;width:39px;height:45px;background:#dfe2e6;border-radius:9px 9px 0 0"></div><svg style="position:absolute;left:1897px;top:580px;" width="14" height="9" viewBox="0 0 14 9" fill="none"><path d="M1.2 7.5 L7 1.8 L12.8 7.5" stroke="#2b3240" stroke-width="1.6"/></svg><div style="position:absolute;left:45px;top:606px;width:1878px;height:450px;background:#fff;border-radius:0 11px 0 0;border-left:1px solid #e6e8eb;border-right:1px solid #e6e8eb;box-sizing:border-box"></div><div style="position:absolute;left:45px;top:682px;width:1878px;height:331px;background:#f4f5f7;border-left:1px solid #e0e2e6;border-right:1px solid #e0e2e6;box-sizing:border-box"></div><div style="position:absolute;left:41px;top:1013px;width:1882px;height:40px;background:#fafbfb"></div><div style="position:absolute;left:60px;top:617px;width:82px;height:30px;border-radius:6px;background:#3d35e0;color:#fff;font-size:13.8px;font-weight:700;line-height:31px;text-align:center">Pay Now</div><div style="position:absolute;left:152px;top:617px;width:115px;height:30px;border:1px solid #d3d6dc;border-radius:6px;box-sizing:border-box;background:#fff"></div><svg style="position:absolute;left:166px;top:621px;" width="20" height="22" viewBox="0 0 20 22" fill="none"><path d="M1.5 1.5 H18.5 L12 9.5 V18.5 C12 19.5 11 20 10 20 C9 20 8 19.5 8 18.5 V9.5 Z" stroke="#2b3240" stroke-width="1.5" stroke-linejoin="round"/></svg><div style="position:absolute;left:193px;top:622.0px;line-height:20px;font-size:14.8px;font-weight:400;color:#262d3b;white-space:nowrap;">Filter</div><svg style="position:absolute;left:237px;top:628px;" width="13" height="9" viewBox="0 0 13 9" fill="none"><path d="M1 1.5 L6.5 7 L12 1.5" stroke="#6f7580" stroke-width="1.4"/></svg><svg style="position:absolute;left:295px;top:625px;" width="9" height="14" viewBox="0 0 9 14" fill="none"><path d="M7.5 1 L1.5 7 L7.5 13" stroke="#4a505a" stroke-width="1.4"/></svg><svg style="position:absolute;left:326px;top:628px;" width="14" height="9" viewBox="0 0 14 9" fill="none"><path d="M1 7.5 L7 1.5 L13 7.5" stroke="#4a505a" stroke-width="1.4"/></svg><div style="position:absolute;left:1047px;top:616px;width:189px;height:30px;border:1px solid #e3e5e9;border-radius:7px;box-sizing:border-box;background:#fff"></div><svg style="position:absolute;left:1055px;top:622px" width="18" height="19" viewBox="0 0 18 19" fill="none"><path d="M4 3 V1 H12 V3" stroke="#8a86e0" stroke-width="1.1"/><rect x="1" y="3" width="12" height="15" rx="1" stroke="#8a86e0" stroke-width="1.2"/><path d="M4 7 H10 M4 10 H7 M5 13 L6.5 14.5 L9.5 11.5" stroke="#8a86e0" stroke-width="1.1"/><path d="M15.5 6 V17 L16.5 18" stroke="#8a86e0" stroke-width="1.3"/></svg><div style="position:absolute;left:1082px;top:621.0px;line-height:20px;font-size:14.5px;font-weight:400;color:#262d3b;white-space:nowrap;">Prepare Sales Invoice</div><div style="position:absolute;left:1256px;top:616px;width:190px;height:30px;border:1px solid #e3e5e9;border-radius:7px;box-sizing:border-box;background:#fff"></div><svg style="position:absolute;left:1264px;top:620px;" width="23" height="24" viewBox="0 0 23 24" fill="none"><path d="M19.00 7.50 L20.58 8.03 L20.05 9.92 L18.43 9.56 L17.83 10.33 L18.57 11.81 L16.86 12.78 L15.96 11.38 L15.00 11.50 L14.47 13.08 L12.58 12.55 L12.94 10.93 L12.17 10.33 L10.69 11.07 L9.72 9.36 L11.12 8.46 L11.00 7.50 L9.42 6.97 L9.95 5.08 L11.57 5.44 L12.17 4.67 L11.43 3.19 L13.14 2.22 L14.04 3.62 L15.00 3.50 L15.53 1.92 L17.42 2.45 L17.06 4.07 L17.83 4.67 L19.31 3.93 L20.28 5.64 L18.88 6.54 Z" stroke="#5a606b" stroke-width="1.0" stroke-linejoin="round"/><circle cx="15" cy="7.5" r="1.7" stroke="#5a606b" stroke-width="1.0"/><path d="M12.00 16.00 L13.67 16.58 L13.09 18.68 L11.36 18.32 L10.68 19.18 L11.45 20.78 L9.55 21.85 L8.58 20.37 L7.50 20.50 L6.92 22.17 L4.82 21.59 L5.18 19.86 L4.32 19.18 L2.72 19.95 L1.65 18.05 L3.13 17.08 L3.00 16.00 L1.33 15.42 L1.91 13.32 L3.64 13.68 L4.32 12.82 L3.55 11.22 L5.45 10.15 L6.42 11.63 L7.50 11.50 L8.08 9.83 L10.18 10.41 L9.82 12.14 L10.68 12.82 L12.28 12.05 L13.35 13.95 L11.87 14.92 Z" stroke="#5a606b" stroke-width="1.0" stroke-linejoin="round"/><circle cx="7.5" cy="16" r="1.9" stroke="#5a606b" stroke-width="1.0"/></svg><div style="position:absolute;left:1296px;top:621.0px;line-height:20px;font-size:14.5px;font-weight:400;color:#262d3b;white-space:nowrap;">Prepare Shipping D<span style="letter-spacing:-0.9px">...</span></div><div style="position:absolute;left:1466px;top:616px;width:102px;height:30px;border:1px solid #e3e5e9;border-radius:7px;box-sizing:border-box;background:#fff"></div><div style="position:absolute;left:1479px;top:621.0px;line-height:20px;font-size:15px;font-weight:400;color:#262d3b;white-space:nowrap;">Actions</div><svg style="position:absolute;left:1541px;top:624px;" width="9" height="14" viewBox="0 0 9 14" fill="none"><path d="M1.5 1 L7.5 7 L1.5 13" stroke="#6f7580" stroke-width="1.4"/></svg><div style="position:absolute;left:1589px;top:616px;width:60px;height:30px;border:1px solid #eceef1;border-radius:6px;box-sizing:border-box;background:#fff"></div><div style="position:absolute;left:1619px;top:617px;width:29px;height:28px;background:#dfeafb;border-radius:0 5px 5px 0"></div><svg style="position:absolute;left:1594px;top:622px;" width="19" height="18" viewBox="0 0 19 18" fill="none"><rect x="1" y="1" width="17" height="16" rx="2" stroke="#222" stroke-width="1.4"/><path d="M1 4.5 H18" stroke="#222" stroke-width="1.3"/><path d="M4 8 H14 M4 11 H11 M4 14 H8" stroke="#222" stroke-width="1.4"/></svg><svg style="position:absolute;left:1624px;top:622px;" width="20" height="18" viewBox="0 0 20 18" fill="none"><rect x="1" y="1" width="18" height="16" rx="3" stroke="#2e3a55" stroke-width="1.4"/><path d="M1 4.5 H19" stroke="#2e3a55" stroke-width="1.2"/><path d="M7 1 V17 M10 1 V17 M13 1 V17" stroke="#2e3a55" stroke-width="1.3"/></svg><div style="position:absolute;left:1669px;top:616px;width:31px;height:30px;border:1px solid #eceef1;border-radius:6px;box-sizing:border-box;background:#fff"></div><svg style="position:absolute;left:1674px;top:621px;" width="20" height="19" viewBox="0 0 20 19" fill="none"><rect x="1" y="1" width="18" height="17" rx="2" stroke="#222" stroke-width="1.4"/><path d="M1 5 H19" stroke="#222" stroke-width="1.3"/><path d="M4 9 H10 M4 12.5 H8 M4 15.5 H8" stroke="#222" stroke-width="1.3"/><circle cx="13" cy="12.5" r="2.6" stroke="#222" stroke-width="1.3"/><path d="M15 14.5 L17.5 17" stroke="#222" stroke-width="1.4"/></svg><div style="position:absolute;left:1719px;top:617px;width:1px;height:30px;background:#e3e5e9"></div><svg style="position:absolute;left:1744px;top:622px;" width="16" height="19" viewBox="0 0 16 19" fill="none"><path d="M0.8 4.2 H15.2" stroke="#a3a8af" stroke-width="1.3"/><path d="M5 4 V1.8 H11 V4" stroke="#a3a8af" stroke-width="1.2"/><path d="M2.6 4.2 V16.8 C2.6 17.4 3 17.8 3.6 17.8 H12.4 C13 17.8 13.4 17.4 13.4 16.8 V4.2" stroke="#a3a8af" stroke-width="1.2"/><path d="M5.6 7.2 V15 M8 7.2 V15 M10.4 7.2 V15" stroke="#a3a8af" stroke-width="1"/></svg><svg style="position:absolute;left:1775px;top:622px;" width="17" height="19" viewBox="0 0 17 19" fill="none"><path d="M5.5 7 H2.5 V17.5 C2.5 18 2.8 18.2 3.3 18.2 H13.7 C14.2 18.2 14.5 18 14.5 17.5 V7 H11.5" stroke="#a3a8af" stroke-width="1.3" stroke-linejoin="round"/><path d="M8.5 12.5 V1.5 M5 5 L8.5 1.5 L12 5" stroke="#a3a8af" stroke-width="1.3"/></svg><svg style="position:absolute;left:1806px;top:621px;" width="20" height="21" viewBox="0 0 20 21" fill="none"><path d="M3 15.5 C4 14 4.3 12.5 4.3 9.5 C4.3 5.5 6.8 2.5 10 2.5 C13.2 2.5 15.7 5.5 15.7 9.5 C15.7 12.5 16 14 17 15.5 Z" stroke="#111" stroke-width="1.6" stroke-linejoin="round"/><path d="M2 15.6 H18" stroke="#111" stroke-width="1.6"/><path d="M7.8 17.5 C8.3 19.5 11.7 19.5 12.2 17.5" stroke="#111" stroke-width="1.6"/></svg><div style="position:absolute;left:1848px;top:617px;width:1px;height:30px;background:#e3e5e9"></div><div style="position:absolute;left:1870.8px;top:630.3px;width:2.4px;height:2.4px;background:#2b3240;border-radius:50%"></div><div style="position:absolute;left:1879.8px;top:630.3px;width:2.4px;height:2.4px;background:#2b3240;border-radius:50%"></div><div style="position:absolute;left:1888.8px;top:630.3px;width:2.4px;height:2.4px;background:#2b3240;border-radius:50%"></div><div style="position:absolute;left:59px;top:658px;width:1839px;height:24px;background:#eceef1;border-bottom:1px solid #dcdfe3;box-sizing:border-box"></div><div style="position:absolute;left:66px;top:661px;width:19px;height:19px;border:1.2px solid #d8dbe0;border-radius:3px;box-sizing:border-box;background:#eceef1"></div><div style="position:absolute;left:93px;top:660.0px;line-height:20px;font-size:12.8px;font-weight:700;color:#6e737c;white-space:nowrap;">Part Number<span style="color:#e5533f">*</span></div><div style="position:absolute;left:224px;top:660.0px;line-height:20px;font-size:12.8px;font-weight:700;color:#6e737c;white-space:nowrap;">Part Description</div><div style="position:absolute;left:304px;width:400px;text-align:center;top:660.0px;line-height:20px;font-size:12.8px;font-weight:700;color:#6e737c;white-space:nowrap;">Qty</div><div style="position:absolute;left:564px;top:660.0px;line-height:20px;font-size:12.8px;font-weight:700;color:#6e737c;white-space:nowrap;">Unit</div><div style="position:absolute;left:484px;width:400px;text-align:center;top:660.0px;line-height:20px;font-size:12.8px;font-weight:700;color:#6e737c;white-space:nowrap;">Billable?</div><div style="position:absolute;left:744px;top:660.0px;line-height:20px;font-size:12.8px;font-weight:700;color:#6e737c;white-space:nowrap;">Unit Price</div><div style="position:absolute;left:834px;top:660.0px;line-height:20px;font-size:12.8px;font-weight:700;color:#6e737c;white-space:nowrap;">Unit Price w/Tax</div><div style="position:absolute;left:984px;top:660.0px;line-height:20px;font-size:12.8px;font-weight:700;color:#6e737c;white-space:nowrap;">Cost</div><div style="position:absolute;left:904px;width:400px;text-align:center;top:660.0px;line-height:20px;font-size:12.8px;font-weight:700;color:#6e737c;white-space:nowrap;">Taxable?</div><div style="position:absolute;left:1164px;top:660.0px;line-height:20px;font-size:12.8px;font-weight:700;color:#6e737c;white-space:nowrap;">Currency</div><div style="position:absolute;left:1254px;top:660.0px;line-height:20px;font-size:12.8px;font-weight:700;color:#6e737c;white-space:nowrap;">Title</div><div style="position:absolute;left:1454px;top:660.0px;line-height:20px;font-size:12.8px;font-weight:700;color:#6e737c;white-space:nowrap;">Title</div><div style="position:absolute;left:59px;top:682px;width:1863px;height:26px;background:#ffffff"></div><div style="position:absolute;left:66px;top:685px;width:20px;height:20px;border:1.2px solid #d5d8dd;border-radius:3px;box-sizing:border-box;background:#fff"></div><div style="position:absolute;left:98px;top:684.5px;line-height:20px;font-size:14.6px;font-weight:400;color:#262c38;white-space:nowrap;">FD001</div><div style="position:absolute;left:224px;top:684.5px;line-height:20px;font-size:15.1px;font-weight:400;color:#262c38;white-space:nowrap;">Pistachio Macarons</div><div style="position:absolute;left:304px;width:400px;text-align:center;top:684.5px;line-height:20px;font-size:14.6px;font-weight:400;color:#262c38;white-space:nowrap;">10</div><div style="position:absolute;left:564px;top:684.5px;line-height:20px;font-size:14.6px;font-weight:400;color:#262c38;white-space:nowrap;">ea</div><div style="position:absolute;left:674px;top:685px;width:20px;height:20px;border:1.2px solid #d5d8dd;border-radius:3px;box-sizing:border-box;background:#fff"></div><svg style="position:absolute;left:677px;top:689px;" width="14" height="12" viewBox="0 0 14 12" fill="none"><path d="M1.5 6 L5 9.5 L12.5 2" stroke="#3d35e0" stroke-width="1.8"/></svg><div style="position:absolute;right:1156px;top:684.5px;line-height:20px;font-size:14.6px;font-weight:400;color:#262c38;white-space:nowrap;">6.00</div><div style="position:absolute;left:834px;top:684.5px;line-height:20px;font-size:14.6px;font-weight:400;color:#262c38;white-space:nowrap;">Text</div><div style="position:absolute;right:916px;top:684.5px;line-height:20px;font-size:14.6px;font-weight:400;color:#262c38;white-space:nowrap;">60.00</div><div style="position:absolute;left:1094px;top:685px;width:20px;height:20px;border:1px solid #cfd2d7;border-radius:3px;box-sizing:border-box;background:#dcdfe3"></div><svg style="position:absolute;left:1097px;top:689px;" width="14" height="12" viewBox="0 0 14 12" fill="none"><path d="M1.5 6 L5 9.5 L12.5 2" stroke="#9a9fa7" stroke-width="1.5"/></svg><div style="position:absolute;left:1164px;top:684.5px;line-height:20px;font-size:14.6px;font-weight:400;color:#262c38;white-space:nowrap;">$ USD</div><div style="position:absolute;left:1254px;top:684.5px;line-height:20px;font-size:14.6px;font-weight:400;color:#262c38;white-space:nowrap;">Text</div><div style="position:absolute;left:1454px;top:684.5px;line-height:20px;font-size:14.6px;font-weight:400;color:#262c38;white-space:nowrap;">Text</div><div style="position:absolute;left:59px;top:708px;width:1863px;height:26px;background:#e5f4fb"></div><div style="position:absolute;left:66px;top:711px;width:20px;height:20px;border:1.2px solid #d5d8dd;border-radius:3px;box-sizing:border-box;background:#e5f4fb"></div><div style="position:absolute;left:98px;top:710.5px;line-height:20px;font-size:14.6px;font-weight:400;color:#262c38;white-space:nowrap;">FD003</div><div style="position:absolute;left:304px;width:400px;text-align:center;top:710.5px;line-height:20px;font-size:14.6px;font-weight:400;color:#262c38;white-space:nowrap;">5</div><div style="position:absolute;left:564px;top:710.5px;line-height:20px;font-size:14.6px;font-weight:400;color:#262c38;white-space:nowrap;">ea</div><div style="position:absolute;left:674px;top:711px;width:20px;height:20px;border:1.2px solid #d5d8dd;border-radius:3px;box-sizing:border-box;background:transparent"></div><svg style="position:absolute;left:677px;top:715px;" width="14" height="12" viewBox="0 0 14 12" fill="none"><path d="M1.5 6 L5 9.5 L12.5 2" stroke="#3d35e0" stroke-width="1.8"/></svg><div style="position:absolute;right:1156px;top:710.5px;line-height:20px;font-size:14.6px;font-weight:400;color:#262c38;white-space:nowrap;">25.00</div><div style="position:absolute;left:834px;top:710.5px;line-height:20px;font-size:14.6px;font-weight:400;color:#262c38;white-space:nowrap;">Text</div><div style="position:absolute;right:916px;top:710.5px;line-height:20px;font-size:14.6px;font-weight:400;color:#262c38;white-space:nowrap;">125.00</div><div style="position:absolute;left:1094px;top:711px;width:20px;height:20px;border:1px solid #cfd2d7;border-radius:3px;box-sizing:border-box;background:#dcdfe3"></div><svg style="position:absolute;left:1097px;top:715px;" width="14" height="12" viewBox="0 0 14 12" fill="none"><path d="M1.5 6 L5 9.5 L12.5 2" stroke="#9a9fa7" stroke-width="1.5"/></svg><div style="position:absolute;left:1164px;top:710.5px;line-height:20px;font-size:14.6px;font-weight:400;color:#262c38;white-space:nowrap;">$ USD</div><div style="position:absolute;left:1254px;top:710.5px;line-height:20px;font-size:14.6px;font-weight:400;color:#262c38;white-space:nowrap;">Text</div><div style="position:absolute;left:1454px;top:710.5px;line-height:20px;font-size:14.6px;font-weight:400;color:#262c38;white-space:nowrap;">Text</div><div style="position:absolute;left:59px;top:734px;width:1863px;height:26px;background:#ffffff"></div><div style="position:absolute;left:66px;top:737px;width:20px;height:20px;border:1.2px solid #d5d8dd;border-radius:3px;box-sizing:border-box;background:#fff"></div><div style="position:absolute;left:98px;top:736.5px;line-height:20px;font-size:14.6px;font-weight:400;color:#262c38;white-space:nowrap;">FD008</div><div style="position:absolute;left:224px;top:736.5px;line-height:20px;font-size:15.1px;font-weight:400;color:#262c38;white-space:nowrap;">Vanila Macarons</div><div style="position:absolute;left:304px;width:400px;text-align:center;top:736.5px;line-height:20px;font-size:14.6px;font-weight:400;color:#262c38;white-space:nowrap;">15</div><div style="position:absolute;left:564px;top:736.5px;line-height:20px;font-size:14.6px;font-weight:400;color:#262c38;white-space:nowrap;">ea</div><div style="position:absolute;left:674px;top:737px;width:20px;height:20px;border:1.2px solid #d5d8dd;border-radius:3px;box-sizing:border-box;background:transparent"></div><svg style="position:absolute;left:677px;top:741px;" width="14" height="12" viewBox="0 0 14 12" fill="none"><path d="M1.5 6 L5 9.5 L12.5 2" stroke="#3d35e0" stroke-width="1.8"/></svg><div style="position:absolute;right:1156px;top:736.5px;line-height:20px;font-size:14.6px;font-weight:400;color:#262c38;white-space:nowrap;">5.00</div><div style="position:absolute;left:834px;top:736.5px;line-height:20px;font-size:14.6px;font-weight:400;color:#262c38;white-space:nowrap;">Text</div><div style="position:absolute;right:916px;top:736.5px;line-height:20px;font-size:14.6px;font-weight:400;color:#262c38;white-space:nowrap;">50.00</div><div style="position:absolute;left:1094px;top:737px;width:20px;height:20px;border:1px solid #cfd2d7;border-radius:3px;box-sizing:border-box;background:#dcdfe3"></div><svg style="position:absolute;left:1097px;top:741px;" width="14" height="12" viewBox="0 0 14 12" fill="none"><path d="M1.5 6 L5 9.5 L12.5 2" stroke="#9a9fa7" stroke-width="1.5"/></svg><div style="position:absolute;left:1164px;top:736.5px;line-height:20px;font-size:14.6px;font-weight:400;color:#262c38;white-space:nowrap;">$ USD</div><div style="position:absolute;left:1254px;top:736.5px;line-height:20px;font-size:14.6px;font-weight:400;color:#262c38;white-space:nowrap;">Text</div><div style="position:absolute;left:1454px;top:736.5px;line-height:20px;font-size:14.6px;font-weight:400;color:#262c38;white-space:nowrap;">Text</div><div style="position:absolute;left:59px;top:760px;width:1863px;height:26px;background:#f4f5f7"></div><div style="position:absolute;left:66px;top:763px;width:20px;height:20px;border:1.2px solid #d5d8dd;border-radius:3px;box-sizing:border-box;background:#f4f5f7"></div><div style="position:absolute;left:98px;top:762.5px;line-height:20px;font-size:14.6px;font-weight:400;color:#262c38;white-space:nowrap;">FD008</div><div style="position:absolute;left:224px;top:762.5px;line-height:20px;font-size:15.1px;font-weight:400;color:#262c38;white-space:nowrap;">Vanila Macarons</div><div style="position:absolute;left:304px;width:400px;text-align:center;top:762.5px;line-height:20px;font-size:14.6px;font-weight:400;color:#262c38;white-space:nowrap;">15</div><div style="position:absolute;left:564px;top:762.5px;line-height:20px;font-size:14.6px;font-weight:400;color:#262c38;white-space:nowrap;">ea</div><div style="position:absolute;left:674px;top:763px;width:20px;height:20px;border:1.2px solid #d5d8dd;border-radius:3px;box-sizing:border-box;background:transparent"></div><svg style="position:absolute;left:677px;top:767px;" width="14" height="12" viewBox="0 0 14 12" fill="none"><path d="M1.5 6 L5 9.5 L12.5 2" stroke="#3d35e0" stroke-width="1.8"/></svg><div style="position:absolute;right:1156px;top:762.5px;line-height:20px;font-size:14.6px;font-weight:400;color:#262c38;white-space:nowrap;">5.00</div><div style="position:absolute;left:834px;top:762.5px;line-height:20px;font-size:14.6px;font-weight:400;color:#262c38;white-space:nowrap;">Text</div><div style="position:absolute;right:916px;top:762.5px;line-height:20px;font-size:14.6px;font-weight:400;color:#262c38;white-space:nowrap;">50.00</div><div style="position:absolute;left:1094px;top:763px;width:20px;height:20px;border:1px solid #cfd2d7;border-radius:3px;box-sizing:border-box;background:#dcdfe3"></div><svg style="position:absolute;left:1097px;top:767px;" width="14" height="12" viewBox="0 0 14 12" fill="none"><path d="M1.5 6 L5 9.5 L12.5 2" stroke="#9a9fa7" stroke-width="1.5"/></svg><div style="position:absolute;left:1164px;top:762.5px;line-height:20px;font-size:14.6px;font-weight:400;color:#262c38;white-space:nowrap;">$ USD</div><div style="position:absolute;left:1254px;top:762.5px;line-height:20px;font-size:14.6px;font-weight:400;color:#262c38;white-space:nowrap;">Text</div><div style="position:absolute;left:1454px;top:762.5px;line-height:20px;font-size:14.6px;font-weight:400;color:#262c38;white-space:nowrap;">Text</div><div style="position:absolute;left:59px;top:786px;width:1863px;height:26px;background:#ffffff"></div><div style="position:absolute;left:66px;top:789px;width:20px;height:20px;border:1.2px solid #d5d8dd;border-radius:3px;box-sizing:border-box;background:#fff"></div><div style="position:absolute;left:98px;top:788.5px;line-height:20px;font-size:14.6px;font-weight:400;color:#262c38;white-space:nowrap;">FD008</div><div style="position:absolute;left:224px;top:788.5px;line-height:20px;font-size:15.1px;font-weight:400;color:#262c38;white-space:nowrap;">Vanila Macarons</div><div style="position:absolute;left:304px;width:400px;text-align:center;top:788.5px;line-height:20px;font-size:14.6px;font-weight:400;color:#262c38;white-space:nowrap;">15</div><div style="position:absolute;left:564px;top:788.5px;line-height:20px;font-size:14.6px;font-weight:400;color:#262c38;white-space:nowrap;">ea</div><div style="position:absolute;left:674px;top:789px;width:20px;height:20px;border:1.2px solid #d5d8dd;border-radius:3px;box-sizing:border-box;background:transparent"></div><svg style="position:absolute;left:677px;top:793px;" width="14" height="12" viewBox="0 0 14 12" fill="none"><path d="M1.5 6 L5 9.5 L12.5 2" stroke="#3d35e0" stroke-width="1.8"/></svg><div style="position:absolute;right:1156px;top:788.5px;line-height:20px;font-size:14.6px;font-weight:400;color:#262c38;white-space:nowrap;">5.00</div><div style="position:absolute;left:834px;top:788.5px;line-height:20px;font-size:14.6px;font-weight:400;color:#262c38;white-space:nowrap;">Text</div><div style="position:absolute;right:916px;top:788.5px;line-height:20px;font-size:14.6px;font-weight:400;color:#262c38;white-space:nowrap;">50.00</div><div style="position:absolute;left:1094px;top:789px;width:20px;height:20px;border:1px solid #cfd2d7;border-radius:3px;box-sizing:border-box;background:#dcdfe3"></div><svg style="position:absolute;left:1097px;top:793px;" width="14" height="12" viewBox="0 0 14 12" fill="none"><path d="M1.5 6 L5 9.5 L12.5 2" stroke="#9a9fa7" stroke-width="1.5"/></svg><div style="position:absolute;left:1164px;top:788.5px;line-height:20px;font-size:14.6px;font-weight:400;color:#262c38;white-space:nowrap;">$ USD</div><div style="position:absolute;left:1254px;top:788.5px;line-height:20px;font-size:14.6px;font-weight:400;color:#262c38;white-space:nowrap;">Text</div><div style="position:absolute;left:1454px;top:788.5px;line-height:20px;font-size:14.6px;font-weight:400;color:#262c38;white-space:nowrap;">Text</div><div style="position:absolute;left:59px;top:812px;width:1863px;height:26px;background:#f4f5f7"></div><div style="position:absolute;left:66px;top:815px;width:20px;height:20px;border:1.2px solid #d5d8dd;border-radius:3px;box-sizing:border-box;background:#f4f5f7"></div><div style="position:absolute;left:98px;top:814.5px;line-height:20px;font-size:14.6px;font-weight:400;color:#262c38;white-space:nowrap;">FD008</div><div style="position:absolute;left:224px;top:814.5px;line-height:20px;font-size:15.1px;font-weight:400;color:#262c38;white-space:nowrap;">Vanila Macarons</div><div style="position:absolute;left:304px;width:400px;text-align:center;top:814.5px;line-height:20px;font-size:14.6px;font-weight:400;color:#262c38;white-space:nowrap;">15</div><div style="position:absolute;left:564px;top:814.5px;line-height:20px;font-size:14.6px;font-weight:400;color:#262c38;white-space:nowrap;">ea</div><div style="position:absolute;left:674px;top:815px;width:20px;height:20px;border:1.2px solid #d5d8dd;border-radius:3px;box-sizing:border-box;background:transparent"></div><svg style="position:absolute;left:677px;top:819px;" width="14" height="12" viewBox="0 0 14 12" fill="none"><path d="M1.5 6 L5 9.5 L12.5 2" stroke="#3d35e0" stroke-width="1.8"/></svg><div style="position:absolute;right:1156px;top:814.5px;line-height:20px;font-size:14.6px;font-weight:400;color:#262c38;white-space:nowrap;">5.00</div><div style="position:absolute;left:834px;top:814.5px;line-height:20px;font-size:14.6px;font-weight:400;color:#262c38;white-space:nowrap;">Text</div><div style="position:absolute;right:916px;top:814.5px;line-height:20px;font-size:14.6px;font-weight:400;color:#262c38;white-space:nowrap;">50.00</div><div style="position:absolute;left:1094px;top:815px;width:20px;height:20px;border:1px solid #cfd2d7;border-radius:3px;box-sizing:border-box;background:#dcdfe3"></div><svg style="position:absolute;left:1097px;top:819px;" width="14" height="12" viewBox="0 0 14 12" fill="none"><path d="M1.5 6 L5 9.5 L12.5 2" stroke="#9a9fa7" stroke-width="1.5"/></svg><div style="position:absolute;left:1164px;top:814.5px;line-height:20px;font-size:14.6px;font-weight:400;color:#262c38;white-space:nowrap;">$ USD</div><div style="position:absolute;left:1254px;top:814.5px;line-height:20px;font-size:14.6px;font-weight:400;color:#262c38;white-space:nowrap;">Text</div><div style="position:absolute;left:1454px;top:814.5px;line-height:20px;font-size:14.6px;font-weight:400;color:#262c38;white-space:nowrap;">Text</div><div style="position:absolute;left:59px;top:838px;width:1863px;height:26px;background:#ffffff"></div><div style="position:absolute;left:66px;top:841px;width:20px;height:20px;border:1.2px solid #d5d8dd;border-radius:3px;box-sizing:border-box;background:#fff"></div><div style="position:absolute;left:98px;top:840.5px;line-height:20px;font-size:14.6px;font-weight:400;color:#262c38;white-space:nowrap;">FD008</div><div style="position:absolute;left:224px;top:840.5px;line-height:20px;font-size:15.1px;font-weight:400;color:#262c38;white-space:nowrap;">Vanila Macarons</div><div style="position:absolute;left:304px;width:400px;text-align:center;top:840.5px;line-height:20px;font-size:14.6px;font-weight:400;color:#262c38;white-space:nowrap;">15</div><div style="position:absolute;left:564px;top:840.5px;line-height:20px;font-size:14.6px;font-weight:400;color:#262c38;white-space:nowrap;">ea</div><div style="position:absolute;left:674px;top:841px;width:20px;height:20px;border:1.2px solid #d5d8dd;border-radius:3px;box-sizing:border-box;background:transparent"></div><svg style="position:absolute;left:677px;top:845px;" width="14" height="12" viewBox="0 0 14 12" fill="none"><path d="M1.5 6 L5 9.5 L12.5 2" stroke="#3d35e0" stroke-width="1.8"/></svg><div style="position:absolute;right:1156px;top:840.5px;line-height:20px;font-size:14.6px;font-weight:400;color:#262c38;white-space:nowrap;">5.00</div><div style="position:absolute;left:834px;top:840.5px;line-height:20px;font-size:14.6px;font-weight:400;color:#262c38;white-space:nowrap;">Text</div><div style="position:absolute;right:916px;top:840.5px;line-height:20px;font-size:14.6px;font-weight:400;color:#262c38;white-space:nowrap;">50.00</div><div style="position:absolute;left:1094px;top:841px;width:20px;height:20px;border:1px solid #cfd2d7;border-radius:3px;box-sizing:border-box;background:#dcdfe3"></div><svg style="position:absolute;left:1097px;top:845px;" width="14" height="12" viewBox="0 0 14 12" fill="none"><path d="M1.5 6 L5 9.5 L12.5 2" stroke="#9a9fa7" stroke-width="1.5"/></svg><div style="position:absolute;left:1164px;top:840.5px;line-height:20px;font-size:14.6px;font-weight:400;color:#262c38;white-space:nowrap;">$ USD</div><div style="position:absolute;left:1254px;top:840.5px;line-height:20px;font-size:14.6px;font-weight:400;color:#262c38;white-space:nowrap;">Text</div><div style="position:absolute;left:1454px;top:840.5px;line-height:20px;font-size:14.6px;font-weight:400;color:#262c38;white-space:nowrap;">Text</div><div style="position:absolute;left:59px;top:864px;width:1863px;height:26px;background:#f4f5f7"></div><div style="position:absolute;left:66px;top:867px;width:20px;height:20px;border:1.2px solid #d5d8dd;border-radius:3px;box-sizing:border-box;background:#f4f5f7"></div><div style="position:absolute;left:98px;top:866.5px;line-height:20px;font-size:14.6px;font-weight:400;color:#262c38;white-space:nowrap;">FD008</div><div style="position:absolute;left:224px;top:866.5px;line-height:20px;font-size:15.1px;font-weight:400;color:#262c38;white-space:nowrap;">Vanila Macarons</div><div style="position:absolute;left:304px;width:400px;text-align:center;top:866.5px;line-height:20px;font-size:14.6px;font-weight:400;color:#262c38;white-space:nowrap;">15</div><div style="position:absolute;left:564px;top:866.5px;line-height:20px;font-size:14.6px;font-weight:400;color:#262c38;white-space:nowrap;">ea</div><div style="position:absolute;left:674px;top:867px;width:20px;height:20px;border:1.2px solid #d5d8dd;border-radius:3px;box-sizing:border-box;background:transparent"></div><svg style="position:absolute;left:677px;top:871px;" width="14" height="12" viewBox="0 0 14 12" fill="none"><path d="M1.5 6 L5 9.5 L12.5 2" stroke="#3d35e0" stroke-width="1.8"/></svg><div style="position:absolute;right:1156px;top:866.5px;line-height:20px;font-size:14.6px;font-weight:400;color:#262c38;white-space:nowrap;">5.00</div><div style="position:absolute;left:834px;top:866.5px;line-height:20px;font-size:14.6px;font-weight:400;color:#262c38;white-space:nowrap;">Text</div><div style="position:absolute;right:916px;top:866.5px;line-height:20px;font-size:14.6px;font-weight:400;color:#262c38;white-space:nowrap;">50.00</div><div style="position:absolute;left:1094px;top:867px;width:20px;height:20px;border:1px solid #cfd2d7;border-radius:3px;box-sizing:border-box;background:#dcdfe3"></div><svg style="position:absolute;left:1097px;top:871px;" width="14" height="12" viewBox="0 0 14 12" fill="none"><path d="M1.5 6 L5 9.5 L12.5 2" stroke="#9a9fa7" stroke-width="1.5"/></svg><div style="position:absolute;left:1164px;top:866.5px;line-height:20px;font-size:14.6px;font-weight:400;color:#262c38;white-space:nowrap;">$ USD</div><div style="position:absolute;left:1254px;top:866.5px;line-height:20px;font-size:14.6px;font-weight:400;color:#262c38;white-space:nowrap;">Text</div><div style="position:absolute;left:1454px;top:866.5px;line-height:20px;font-size:14.6px;font-weight:400;color:#262c38;white-space:nowrap;">Text</div><div style="position:absolute;left:59px;top:890px;width:1863px;height:26px;background:#ffffff"></div><div style="position:absolute;left:66px;top:893px;width:20px;height:20px;border:1.2px solid #d5d8dd;border-radius:3px;box-sizing:border-box;background:#fff"></div><div style="position:absolute;left:98px;top:892.5px;line-height:20px;font-size:14.6px;font-weight:400;color:#262c38;white-space:nowrap;">FD008</div><div style="position:absolute;left:224px;top:892.5px;line-height:20px;font-size:15.1px;font-weight:400;color:#262c38;white-space:nowrap;">Vanila Macarons</div><div style="position:absolute;left:304px;width:400px;text-align:center;top:892.5px;line-height:20px;font-size:14.6px;font-weight:400;color:#262c38;white-space:nowrap;">15</div><div style="position:absolute;left:564px;top:892.5px;line-height:20px;font-size:14.6px;font-weight:400;color:#262c38;white-space:nowrap;">ea</div><div style="position:absolute;left:674px;top:893px;width:20px;height:20px;border:1.2px solid #d5d8dd;border-radius:3px;box-sizing:border-box;background:transparent"></div><svg style="position:absolute;left:677px;top:897px;" width="14" height="12" viewBox="0 0 14 12" fill="none"><path d="M1.5 6 L5 9.5 L12.5 2" stroke="#3d35e0" stroke-width="1.8"/></svg><div style="position:absolute;right:1156px;top:892.5px;line-height:20px;font-size:14.6px;font-weight:400;color:#262c38;white-space:nowrap;">5.00</div><div style="position:absolute;left:834px;top:892.5px;line-height:20px;font-size:14.6px;font-weight:400;color:#262c38;white-space:nowrap;">Text</div><div style="position:absolute;right:916px;top:892.5px;line-height:20px;font-size:14.6px;font-weight:400;color:#262c38;white-space:nowrap;">50.00</div><div style="position:absolute;left:1094px;top:893px;width:20px;height:20px;border:1px solid #cfd2d7;border-radius:3px;box-sizing:border-box;background:#dcdfe3"></div><svg style="position:absolute;left:1097px;top:897px;" width="14" height="12" viewBox="0 0 14 12" fill="none"><path d="M1.5 6 L5 9.5 L12.5 2" stroke="#9a9fa7" stroke-width="1.5"/></svg><div style="position:absolute;left:1164px;top:892.5px;line-height:20px;font-size:14.6px;font-weight:400;color:#262c38;white-space:nowrap;">$ USD</div><div style="position:absolute;left:1254px;top:892.5px;line-height:20px;font-size:14.6px;font-weight:400;color:#262c38;white-space:nowrap;">Text</div><div style="position:absolute;left:1454px;top:892.5px;line-height:20px;font-size:14.6px;font-weight:400;color:#262c38;white-space:nowrap;">Text</div><div style="position:absolute;left:59px;top:916px;width:1863px;height:26px;background:#f4f5f7"></div><div style="position:absolute;left:66px;top:919px;width:20px;height:20px;border:1.2px solid #d5d8dd;border-radius:3px;box-sizing:border-box;background:#f4f5f7"></div><div style="position:absolute;left:98px;top:918.5px;line-height:20px;font-size:14.6px;font-weight:400;color:#262c38;white-space:nowrap;">FD008</div><div style="position:absolute;left:224px;top:918.5px;line-height:20px;font-size:15.1px;font-weight:400;color:#262c38;white-space:nowrap;">Vanila Macarons</div><div style="position:absolute;left:304px;width:400px;text-align:center;top:918.5px;line-height:20px;font-size:14.6px;font-weight:400;color:#262c38;white-space:nowrap;">15</div><div style="position:absolute;left:564px;top:918.5px;line-height:20px;font-size:14.6px;font-weight:400;color:#262c38;white-space:nowrap;">ea</div><div style="position:absolute;left:674px;top:919px;width:20px;height:20px;border:1.2px solid #d5d8dd;border-radius:3px;box-sizing:border-box;background:transparent"></div><svg style="position:absolute;left:677px;top:923px;" width="14" height="12" viewBox="0 0 14 12" fill="none"><path d="M1.5 6 L5 9.5 L12.5 2" stroke="#3d35e0" stroke-width="1.8"/></svg><div style="position:absolute;right:1156px;top:918.5px;line-height:20px;font-size:14.6px;font-weight:400;color:#262c38;white-space:nowrap;">5.00</div><div style="position:absolute;left:834px;top:918.5px;line-height:20px;font-size:14.6px;font-weight:400;color:#262c38;white-space:nowrap;">Text</div><div style="position:absolute;right:916px;top:918.5px;line-height:20px;font-size:14.6px;font-weight:400;color:#262c38;white-space:nowrap;">50.00</div><div style="position:absolute;left:1094px;top:919px;width:20px;height:20px;border:1px solid #cfd2d7;border-radius:3px;box-sizing:border-box;background:#dcdfe3"></div><svg style="position:absolute;left:1097px;top:923px;" width="14" height="12" viewBox="0 0 14 12" fill="none"><path d="M1.5 6 L5 9.5 L12.5 2" stroke="#9a9fa7" stroke-width="1.5"/></svg><div style="position:absolute;left:1164px;top:918.5px;line-height:20px;font-size:14.6px;font-weight:400;color:#262c38;white-space:nowrap;">$ USD</div><div style="position:absolute;left:1254px;top:918.5px;line-height:20px;font-size:14.6px;font-weight:400;color:#262c38;white-space:nowrap;">Text</div><div style="position:absolute;left:1454px;top:918.5px;line-height:20px;font-size:14.6px;font-weight:400;color:#262c38;white-space:nowrap;">Text</div><div style="position:absolute;left:59px;top:942px;width:1863px;height:26px;background:#ffffff"></div><div style="position:absolute;left:66px;top:945px;width:20px;height:20px;border:1.2px solid #d5d8dd;border-radius:3px;box-sizing:border-box;background:#fff"></div><div style="position:absolute;left:98px;top:944.5px;line-height:20px;font-size:14.6px;font-weight:400;color:#262c38;white-space:nowrap;">FD008</div><div style="position:absolute;left:224px;top:944.5px;line-height:20px;font-size:15.1px;font-weight:400;color:#262c38;white-space:nowrap;">Vanila Macarons</div><div style="position:absolute;left:304px;width:400px;text-align:center;top:944.5px;line-height:20px;font-size:14.6px;font-weight:400;color:#262c38;white-space:nowrap;">15</div><div style="position:absolute;left:564px;top:944.5px;line-height:20px;font-size:14.6px;font-weight:400;color:#262c38;white-space:nowrap;">ea</div><div style="position:absolute;left:674px;top:945px;width:20px;height:20px;border:1.2px solid #d5d8dd;border-radius:3px;box-sizing:border-box;background:transparent"></div><svg style="position:absolute;left:677px;top:949px;" width="14" height="12" viewBox="0 0 14 12" fill="none"><path d="M1.5 6 L5 9.5 L12.5 2" stroke="#3d35e0" stroke-width="1.8"/></svg><div style="position:absolute;right:1156px;top:944.5px;line-height:20px;font-size:14.6px;font-weight:400;color:#262c38;white-space:nowrap;">5.00</div><div style="position:absolute;left:834px;top:944.5px;line-height:20px;font-size:14.6px;font-weight:400;color:#262c38;white-space:nowrap;">Text</div><div style="position:absolute;right:916px;top:944.5px;line-height:20px;font-size:14.6px;font-weight:400;color:#262c38;white-space:nowrap;">50.00</div><div style="position:absolute;left:1094px;top:945px;width:20px;height:20px;border:1px solid #cfd2d7;border-radius:3px;box-sizing:border-box;background:#dcdfe3"></div><svg style="position:absolute;left:1097px;top:949px;" width="14" height="12" viewBox="0 0 14 12" fill="none"><path d="M1.5 6 L5 9.5 L12.5 2" stroke="#9a9fa7" stroke-width="1.5"/></svg><div style="position:absolute;left:1164px;top:944.5px;line-height:20px;font-size:14.6px;font-weight:400;color:#262c38;white-space:nowrap;">$ USD</div><div style="position:absolute;left:1254px;top:944.5px;line-height:20px;font-size:14.6px;font-weight:400;color:#262c38;white-space:nowrap;">Text</div><div style="position:absolute;left:1454px;top:944.5px;line-height:20px;font-size:14.6px;font-weight:400;color:#262c38;white-space:nowrap;">Text</div><div style="position:absolute;left:59px;top:968px;width:1863px;height:26px;background:#f4f5f7"></div><div style="position:absolute;left:66px;top:971px;width:20px;height:20px;border:1.2px solid #d5d8dd;border-radius:3px;box-sizing:border-box;background:#f4f5f7"></div><div style="position:absolute;left:98px;top:970.5px;line-height:20px;font-size:14.6px;font-weight:400;color:#262c38;white-space:nowrap;">FD008</div><div style="position:absolute;left:224px;top:970.5px;line-height:20px;font-size:15.1px;font-weight:400;color:#262c38;white-space:nowrap;">Vanila Macarons</div><div style="position:absolute;left:304px;width:400px;text-align:center;top:970.5px;line-height:20px;font-size:14.6px;font-weight:400;color:#262c38;white-space:nowrap;">15</div><div style="position:absolute;left:564px;top:970.5px;line-height:20px;font-size:14.6px;font-weight:400;color:#262c38;white-space:nowrap;">ea</div><div style="position:absolute;left:674px;top:971px;width:20px;height:20px;border:1.2px solid #d5d8dd;border-radius:3px;box-sizing:border-box;background:transparent"></div><svg style="position:absolute;left:677px;top:975px;" width="14" height="12" viewBox="0 0 14 12" fill="none"><path d="M1.5 6 L5 9.5 L12.5 2" stroke="#3d35e0" stroke-width="1.8"/></svg><div style="position:absolute;right:1156px;top:970.5px;line-height:20px;font-size:14.6px;font-weight:400;color:#262c38;white-space:nowrap;">5.00</div><div style="position:absolute;left:834px;top:970.5px;line-height:20px;font-size:14.6px;font-weight:400;color:#262c38;white-space:nowrap;">Text</div><div style="position:absolute;right:916px;top:970.5px;line-height:20px;font-size:14.6px;font-weight:400;color:#262c38;white-space:nowrap;">50.00</div><div style="position:absolute;left:1094px;top:971px;width:20px;height:20px;border:1px solid #cfd2d7;border-radius:3px;box-sizing:border-box;background:#dcdfe3"></div><svg style="position:absolute;left:1097px;top:975px;" width="14" height="12" viewBox="0 0 14 12" fill="none"><path d="M1.5 6 L5 9.5 L12.5 2" stroke="#9a9fa7" stroke-width="1.5"/></svg><div style="position:absolute;left:1164px;top:970.5px;line-height:20px;font-size:14.6px;font-weight:400;color:#262c38;white-space:nowrap;">$ USD</div><div style="position:absolute;left:1254px;top:970.5px;line-height:20px;font-size:14.6px;font-weight:400;color:#262c38;white-space:nowrap;">Text</div><div style="position:absolute;left:1454px;top:970.5px;line-height:20px;font-size:14.6px;font-weight:400;color:#262c38;white-space:nowrap;">Text</div><div style="position:absolute;left:209.0px;top:658px;width:1px;height:336px;background:#e1e3e7"></div><div style="position:absolute;left:459.0px;top:658px;width:1px;height:336px;background:#e1e3e7"></div><div style="position:absolute;left:549.0px;top:658px;width:1px;height:336px;background:#e1e3e7"></div><div style="position:absolute;left:639.0px;top:658px;width:1px;height:336px;background:#e1e3e7"></div><div style="position:absolute;left:729.0px;top:658px;width:1px;height:336px;background:#e1e3e7"></div><div style="position:absolute;left:819.0px;top:658px;width:1px;height:336px;background:#e1e3e7"></div><div style="position:absolute;left:969.0px;top:658px;width:1px;height:336px;background:#e1e3e7"></div><div style="position:absolute;left:1059.0px;top:658px;width:1px;height:336px;background:#e1e3e7"></div><div style="position:absolute;left:1149.0px;top:658px;width:1px;height:336px;background:#e1e3e7"></div><div style="position:absolute;left:1239.0px;top:658px;width:1px;height:336px;background:#e1e3e7"></div><div style="position:absolute;left:1439.0px;top:658px;width:1px;height:336px;background:#e1e3e7"></div><div style="position:absolute;left:209.0px;top:658px;width:1px;height:24px;background:#d6d9de"></div><div style="position:absolute;left:459.0px;top:658px;width:1px;height:24px;background:#d6d9de"></div><div style="position:absolute;left:549.0px;top:658px;width:1px;height:24px;background:#d6d9de"></div><div style="position:absolute;left:639.0px;top:658px;width:1px;height:24px;background:#d6d9de"></div><div style="position:absolute;left:729.0px;top:658px;width:1px;height:24px;background:#d6d9de"></div><div style="position:absolute;left:819.0px;top:658px;width:1px;height:24px;background:#d6d9de"></div><div style="position:absolute;left:969.0px;top:658px;width:1px;height:24px;background:#d6d9de"></div><div style="position:absolute;left:1059.0px;top:658px;width:1px;height:24px;background:#d6d9de"></div><div style="position:absolute;left:1149.0px;top:658px;width:1px;height:24px;background:#d6d9de"></div><div style="position:absolute;left:1239.0px;top:658px;width:1px;height:24px;background:#d6d9de"></div><div style="position:absolute;left:1439.0px;top:658px;width:1px;height:24px;background:#d6d9de"></div><div style="position:absolute;left:210px;top:708px;width:249px;height:26px;border:1.5px solid #4a44cc;border-radius:4px;box-sizing:border-box;background:#fff"></div><div style="position:absolute;left:220px;top:711.0px;line-height:20px;font-size:14.8px;font-weight:400;color:#262c38;white-space:nowrap;">Gustavo Lubin</div><svg style="position:absolute;left:387px;top:716px;" width="14" height="10" viewBox="0 0 14 10" fill="none"><path d="M1.5 2 L7 7.5 L12.5 2" stroke="#2b3240" stroke-width="1.5"/></svg><div style="position:absolute;left:408px;top:708px;width:51px;height:26px;background:#3d35e0;border-radius:0 4px 4px 0"></div><div style="position:absolute;left:433px;top:708px;width:1px;height:26px;background:#6a64e8"></div><svg style="position:absolute;left:412px;top:712px;" width="17" height="19" viewBox="0 0 17 19" fill="none"><rect x="2" y="1.5" width="13" height="16" rx="1.5" stroke="#fff" stroke-width="1.4"/><path d="M5 6 H12 M5 9.5 H12 M5 13 H12" stroke="#fff" stroke-width="1.4"/></svg><svg style="position:absolute;left:436px;top:712px;" width="20" height="20" viewBox="0 0 20 20" fill="none"><circle cx="10" cy="10" r="8.5" stroke="#fff" stroke-width="1.6"/><circle cx="10" cy="6" r="1.3" fill="#fff"/><path d="M8.3 9 H10.5 V14.5 M8.3 14.5 H12" stroke="#fff" stroke-width="1.8"/></svg><div style="position:absolute;left:1897px;top:658px;width:25px;height:154px;background:#fdfdfd"></div><div style="position:absolute;left:1908px;top:668px;width:6px;height:99px;background:#dcdfe3;border-radius:3px"></div><div style="position:absolute;left:41px;top:1024px;width:1877px;height:6px;background:#dde0e4;border-radius:3px"></div><div style="position:absolute;left:41px;top:1024px;width:150px;height:6px;background:#bcc1c7;border-radius:3px"></div></div>
</body></html>
